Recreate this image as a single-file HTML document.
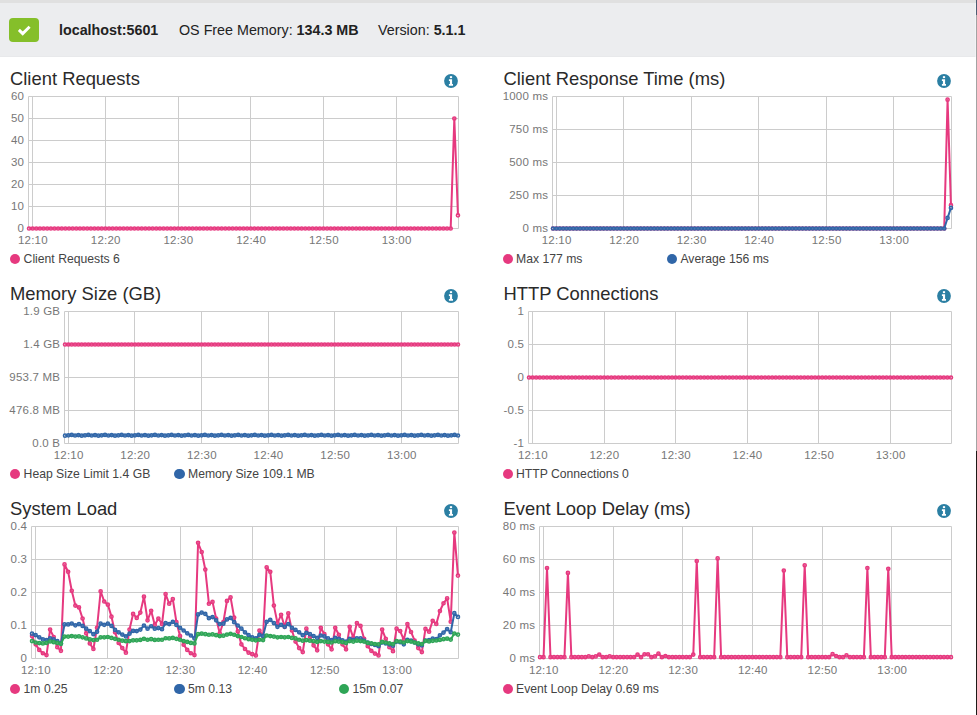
<!DOCTYPE html>
<html><head><meta charset="utf-8"><style>
html,body{margin:0;padding:0;width:977px;height:715px;overflow:hidden;background:#fff;font-family:"Liberation Sans",sans-serif;}
#topstrip{position:absolute;left:0;top:0;width:977px;height:3px;background:#e0e0e0}
#header{position:absolute;left:0;top:3px;width:977px;height:54px;background:#ecedef;border-bottom:1px solid #e8e9eb;box-sizing:border-box}
#ok{position:absolute;left:9px;top:18px;width:30px;height:24px;border-radius:4px;background:#85bf2a}
.h{position:absolute;top:22px;font-size:14.3px;color:#222;white-space:nowrap;line-height:17px}
.h b{font-weight:bold}
.title{position:absolute;font-size:18.4px;color:#2a2a2a;white-space:nowrap;line-height:21px}
.info{position:absolute}
.dot{position:absolute;width:10.2px;height:10.2px;border-radius:50%}
.leg{position:absolute;font-size:12.2px;color:#444;white-space:nowrap;line-height:16px}
#chart{position:absolute;left:0;top:0}
#edge{position:absolute;left:976px;top:0;width:1px;height:715px;background:#a3a3a3}
</style></head><body>
<div id="topstrip"></div>
<div id="header"></div>
<div id="ok"><svg width="30" height="24" viewBox="0 0 30 24"><path d="M9.9 11.9L13.7 15.6L20.6 8.8" fill="none" stroke="#fff" stroke-width="2.9" stroke-linecap="butt"/></svg></div>
<div class="h" style="left:59px"><b>localhost:5601</b></div>
<div class="h" style="left:179px">OS Free Memory: <b>134.3 MB</b></div>
<div class="h" style="left:378px">Version: <b>5.1.1</b></div>
<svg id="chart" width="977" height="715" font-family="Liberation Sans, sans-serif"><g stroke="#cccccc" stroke-width="1" fill="none"><line x1="28.5" y1="96.5" x2="458.5" y2="96.5"/><line x1="28.5" y1="118.5" x2="458.5" y2="118.5"/><line x1="28.5" y1="140.5" x2="458.5" y2="140.5"/><line x1="28.5" y1="162.5" x2="458.5" y2="162.5"/><line x1="28.5" y1="184.5" x2="458.5" y2="184.5"/><line x1="28.5" y1="206.5" x2="458.5" y2="206.5"/><line x1="28.5" y1="228.5" x2="458.5" y2="228.5"/><line x1="32.5" y1="96.5" x2="32.5" y2="228.5"/><line x1="105.5" y1="96.5" x2="105.5" y2="228.5"/><line x1="178.5" y1="96.5" x2="178.5" y2="228.5"/><line x1="250.5" y1="96.5" x2="250.5" y2="228.5"/><line x1="323.5" y1="96.5" x2="323.5" y2="228.5"/><line x1="396.5" y1="96.5" x2="396.5" y2="228.5"/><line x1="28.5" y1="96.5" x2="28.5" y2="228.5"/><line x1="458.5" y1="96.5" x2="458.5" y2="228.5"/></g><g fill="#777777" font-size="11.5" letter-spacing="0.2"><text x="24.2" y="100.1" text-anchor="end">60</text><text x="24.2" y="122.1" text-anchor="end">50</text><text x="24.2" y="144.1" text-anchor="end">40</text><text x="24.2" y="166.1" text-anchor="end">30</text><text x="24.2" y="188.1" text-anchor="end">20</text><text x="24.2" y="210.1" text-anchor="end">10</text><text x="24.2" y="232.1" text-anchor="end">0</text><text x="32.9" y="243.7" text-anchor="middle">12:10</text><text x="105.7" y="243.7" text-anchor="middle">12:20</text><text x="178.4" y="243.7" text-anchor="middle">12:30</text><text x="251.1" y="243.7" text-anchor="middle">12:40</text><text x="323.9" y="243.7" text-anchor="middle">12:50</text><text x="396.6" y="243.7" text-anchor="middle">13:00</text></g><polyline points="29.05,228.50 32.68,228.50 36.32,228.50 39.95,228.50 43.59,228.50 47.22,228.50 50.86,228.50 54.49,228.50 58.13,228.50 61.76,228.50 65.40,228.50 69.03,228.50 72.67,228.50 76.30,228.50 79.94,228.50 83.57,228.50 87.21,228.50 90.84,228.50 94.48,228.50 98.11,228.50 101.74,228.50 105.38,228.50 109.01,228.50 112.65,228.50 116.28,228.50 119.92,228.50 123.55,228.50 127.19,228.50 130.82,228.50 134.46,228.50 138.09,228.50 141.73,228.50 145.36,228.50 149.00,228.50 152.63,228.50 156.27,228.50 159.90,228.50 163.54,228.50 167.17,228.50 170.81,228.50 174.44,228.50 178.07,228.50 181.71,228.50 185.34,228.50 188.98,228.50 192.61,228.50 196.25,228.50 199.88,228.50 203.52,228.50 207.15,228.50 210.79,228.50 214.42,228.50 218.06,228.50 221.69,228.50 225.33,228.50 228.96,228.50 232.60,228.50 236.23,228.50 239.87,228.50 243.50,228.50 247.13,228.50 250.77,228.50 254.40,228.50 258.04,228.50 261.67,228.50 265.31,228.50 268.94,228.50 272.58,228.50 276.21,228.50 279.85,228.50 283.48,228.50 287.12,228.50 290.75,228.50 294.39,228.50 298.02,228.50 301.66,228.50 305.29,228.50 308.93,228.50 312.56,228.50 316.19,228.50 319.83,228.50 323.46,228.50 327.10,228.50 330.73,228.50 334.37,228.50 338.00,228.50 341.64,228.50 345.27,228.50 348.91,228.50 352.54,228.50 356.18,228.50 359.81,228.50 363.45,228.50 367.08,228.50 370.72,228.50 374.35,228.50 377.99,228.50 381.62,228.50 385.26,228.50 388.89,228.50 392.52,228.50 396.16,228.50 399.79,228.50 403.43,228.50 407.06,228.50 410.70,228.50 414.33,228.50 417.97,228.50 421.60,228.50 425.24,228.50 428.87,228.50 432.51,228.50 436.14,228.50 439.78,228.50 443.41,228.50 447.05,228.50 450.68,228.50 454.32,118.50 457.95,215.30" fill="none" stroke="#e6397f" stroke-width="2.0" stroke-linejoin="round"/><g fill="#fff" fill-opacity="0.12" stroke="#e6397f" stroke-width="1.5"><circle cx="29.05" cy="228.50" r="1.6"/><circle cx="32.68" cy="228.50" r="1.6"/><circle cx="36.32" cy="228.50" r="1.6"/><circle cx="39.95" cy="228.50" r="1.6"/><circle cx="43.59" cy="228.50" r="1.6"/><circle cx="47.22" cy="228.50" r="1.6"/><circle cx="50.86" cy="228.50" r="1.6"/><circle cx="54.49" cy="228.50" r="1.6"/><circle cx="58.13" cy="228.50" r="1.6"/><circle cx="61.76" cy="228.50" r="1.6"/><circle cx="65.40" cy="228.50" r="1.6"/><circle cx="69.03" cy="228.50" r="1.6"/><circle cx="72.67" cy="228.50" r="1.6"/><circle cx="76.30" cy="228.50" r="1.6"/><circle cx="79.94" cy="228.50" r="1.6"/><circle cx="83.57" cy="228.50" r="1.6"/><circle cx="87.21" cy="228.50" r="1.6"/><circle cx="90.84" cy="228.50" r="1.6"/><circle cx="94.48" cy="228.50" r="1.6"/><circle cx="98.11" cy="228.50" r="1.6"/><circle cx="101.74" cy="228.50" r="1.6"/><circle cx="105.38" cy="228.50" r="1.6"/><circle cx="109.01" cy="228.50" r="1.6"/><circle cx="112.65" cy="228.50" r="1.6"/><circle cx="116.28" cy="228.50" r="1.6"/><circle cx="119.92" cy="228.50" r="1.6"/><circle cx="123.55" cy="228.50" r="1.6"/><circle cx="127.19" cy="228.50" r="1.6"/><circle cx="130.82" cy="228.50" r="1.6"/><circle cx="134.46" cy="228.50" r="1.6"/><circle cx="138.09" cy="228.50" r="1.6"/><circle cx="141.73" cy="228.50" r="1.6"/><circle cx="145.36" cy="228.50" r="1.6"/><circle cx="149.00" cy="228.50" r="1.6"/><circle cx="152.63" cy="228.50" r="1.6"/><circle cx="156.27" cy="228.50" r="1.6"/><circle cx="159.90" cy="228.50" r="1.6"/><circle cx="163.54" cy="228.50" r="1.6"/><circle cx="167.17" cy="228.50" r="1.6"/><circle cx="170.81" cy="228.50" r="1.6"/><circle cx="174.44" cy="228.50" r="1.6"/><circle cx="178.07" cy="228.50" r="1.6"/><circle cx="181.71" cy="228.50" r="1.6"/><circle cx="185.34" cy="228.50" r="1.6"/><circle cx="188.98" cy="228.50" r="1.6"/><circle cx="192.61" cy="228.50" r="1.6"/><circle cx="196.25" cy="228.50" r="1.6"/><circle cx="199.88" cy="228.50" r="1.6"/><circle cx="203.52" cy="228.50" r="1.6"/><circle cx="207.15" cy="228.50" r="1.6"/><circle cx="210.79" cy="228.50" r="1.6"/><circle cx="214.42" cy="228.50" r="1.6"/><circle cx="218.06" cy="228.50" r="1.6"/><circle cx="221.69" cy="228.50" r="1.6"/><circle cx="225.33" cy="228.50" r="1.6"/><circle cx="228.96" cy="228.50" r="1.6"/><circle cx="232.60" cy="228.50" r="1.6"/><circle cx="236.23" cy="228.50" r="1.6"/><circle cx="239.87" cy="228.50" r="1.6"/><circle cx="243.50" cy="228.50" r="1.6"/><circle cx="247.13" cy="228.50" r="1.6"/><circle cx="250.77" cy="228.50" r="1.6"/><circle cx="254.40" cy="228.50" r="1.6"/><circle cx="258.04" cy="228.50" r="1.6"/><circle cx="261.67" cy="228.50" r="1.6"/><circle cx="265.31" cy="228.50" r="1.6"/><circle cx="268.94" cy="228.50" r="1.6"/><circle cx="272.58" cy="228.50" r="1.6"/><circle cx="276.21" cy="228.50" r="1.6"/><circle cx="279.85" cy="228.50" r="1.6"/><circle cx="283.48" cy="228.50" r="1.6"/><circle cx="287.12" cy="228.50" r="1.6"/><circle cx="290.75" cy="228.50" r="1.6"/><circle cx="294.39" cy="228.50" r="1.6"/><circle cx="298.02" cy="228.50" r="1.6"/><circle cx="301.66" cy="228.50" r="1.6"/><circle cx="305.29" cy="228.50" r="1.6"/><circle cx="308.93" cy="228.50" r="1.6"/><circle cx="312.56" cy="228.50" r="1.6"/><circle cx="316.19" cy="228.50" r="1.6"/><circle cx="319.83" cy="228.50" r="1.6"/><circle cx="323.46" cy="228.50" r="1.6"/><circle cx="327.10" cy="228.50" r="1.6"/><circle cx="330.73" cy="228.50" r="1.6"/><circle cx="334.37" cy="228.50" r="1.6"/><circle cx="338.00" cy="228.50" r="1.6"/><circle cx="341.64" cy="228.50" r="1.6"/><circle cx="345.27" cy="228.50" r="1.6"/><circle cx="348.91" cy="228.50" r="1.6"/><circle cx="352.54" cy="228.50" r="1.6"/><circle cx="356.18" cy="228.50" r="1.6"/><circle cx="359.81" cy="228.50" r="1.6"/><circle cx="363.45" cy="228.50" r="1.6"/><circle cx="367.08" cy="228.50" r="1.6"/><circle cx="370.72" cy="228.50" r="1.6"/><circle cx="374.35" cy="228.50" r="1.6"/><circle cx="377.99" cy="228.50" r="1.6"/><circle cx="381.62" cy="228.50" r="1.6"/><circle cx="385.26" cy="228.50" r="1.6"/><circle cx="388.89" cy="228.50" r="1.6"/><circle cx="392.52" cy="228.50" r="1.6"/><circle cx="396.16" cy="228.50" r="1.6"/><circle cx="399.79" cy="228.50" r="1.6"/><circle cx="403.43" cy="228.50" r="1.6"/><circle cx="407.06" cy="228.50" r="1.6"/><circle cx="410.70" cy="228.50" r="1.6"/><circle cx="414.33" cy="228.50" r="1.6"/><circle cx="417.97" cy="228.50" r="1.6"/><circle cx="421.60" cy="228.50" r="1.6"/><circle cx="425.24" cy="228.50" r="1.6"/><circle cx="428.87" cy="228.50" r="1.6"/><circle cx="432.51" cy="228.50" r="1.6"/><circle cx="436.14" cy="228.50" r="1.6"/><circle cx="439.78" cy="228.50" r="1.6"/><circle cx="443.41" cy="228.50" r="1.6"/><circle cx="447.05" cy="228.50" r="1.6"/><circle cx="450.68" cy="228.50" r="1.6"/><circle cx="454.32" cy="118.50" r="1.6"/><circle cx="457.95" cy="215.30" r="1.6"/></g><g stroke="#cccccc" stroke-width="1" fill="none"><line x1="552.5" y1="96.5" x2="951.5" y2="96.5"/><line x1="552.5" y1="129.5" x2="951.5" y2="129.5"/><line x1="552.5" y1="162.5" x2="951.5" y2="162.5"/><line x1="552.5" y1="195.5" x2="951.5" y2="195.5"/><line x1="552.5" y1="228.5" x2="951.5" y2="228.5"/><line x1="556.5" y1="96.5" x2="556.5" y2="228.5"/><line x1="623.5" y1="96.5" x2="623.5" y2="228.5"/><line x1="691.5" y1="96.5" x2="691.5" y2="228.5"/><line x1="758.5" y1="96.5" x2="758.5" y2="228.5"/><line x1="826.5" y1="96.5" x2="826.5" y2="228.5"/><line x1="893.5" y1="96.5" x2="893.5" y2="228.5"/><line x1="552.5" y1="96.5" x2="552.5" y2="228.5"/><line x1="951.5" y1="96.5" x2="951.5" y2="228.5"/></g><g fill="#777777" font-size="11.5" letter-spacing="0.2"><text x="548.2" y="100.1" text-anchor="end">1000 ms</text><text x="548.2" y="133.1" text-anchor="end">750 ms</text><text x="548.2" y="166.1" text-anchor="end">500 ms</text><text x="548.2" y="199.1" text-anchor="end">250 ms</text><text x="548.2" y="232.1" text-anchor="end">0 ms</text><text x="556.6" y="243.7" text-anchor="middle">12:10</text><text x="624.1" y="243.7" text-anchor="middle">12:20</text><text x="691.6" y="243.7" text-anchor="middle">12:30</text><text x="759.1" y="243.7" text-anchor="middle">12:40</text><text x="826.6" y="243.7" text-anchor="middle">12:50</text><text x="894.1" y="243.7" text-anchor="middle">13:00</text></g><polyline points="553.05,228.50 556.42,228.50 559.79,228.50 563.17,228.50 566.54,228.50 569.91,228.50 573.28,228.50 576.65,228.50 580.03,228.50 583.40,228.50 586.77,228.50 590.14,228.50 593.51,228.50 596.89,228.50 600.26,228.50 603.63,228.50 607.00,228.50 610.37,228.50 613.75,228.50 617.12,228.50 620.49,228.50 623.86,228.50 627.23,228.50 630.61,228.50 633.98,228.50 637.35,228.50 640.72,228.50 644.09,228.50 647.47,228.50 650.84,228.50 654.21,228.50 657.58,228.50 660.96,228.50 664.33,228.50 667.70,228.50 671.07,228.50 674.44,228.50 677.82,228.50 681.19,228.50 684.56,228.50 687.93,228.50 691.30,228.50 694.68,228.50 698.05,228.50 701.42,228.50 704.79,228.50 708.16,228.50 711.54,228.50 714.91,228.50 718.28,228.50 721.65,228.50 725.02,228.50 728.40,228.50 731.77,228.50 735.14,228.50 738.51,228.50 741.88,228.50 745.26,228.50 748.63,228.50 752.00,228.50 755.37,228.50 758.74,228.50 762.12,228.50 765.49,228.50 768.86,228.50 772.23,228.50 775.60,228.50 778.98,228.50 782.35,228.50 785.72,228.50 789.09,228.50 792.46,228.50 795.84,228.50 799.21,228.50 802.58,228.50 805.95,228.50 809.32,228.50 812.70,228.50 816.07,228.50 819.44,228.50 822.81,228.50 826.18,228.50 829.56,228.50 832.93,228.50 836.30,228.50 839.67,228.50 843.04,228.50 846.42,228.50 849.79,228.50 853.16,228.50 856.53,228.50 859.91,228.50 863.28,228.50 866.65,228.50 870.02,228.50 873.39,228.50 876.77,228.50 880.14,228.50 883.51,228.50 886.88,228.50 890.25,228.50 893.63,228.50 897.00,228.50 900.37,228.50 903.74,228.50 907.11,228.50 910.49,228.50 913.86,228.50 917.23,228.50 920.60,228.50 923.97,228.50 927.35,228.50 930.72,228.50 934.09,228.50 937.46,228.50 940.83,228.50 944.21,228.50 947.58,99.67 950.95,205.14" fill="none" stroke="#e6397f" stroke-width="2.0" stroke-linejoin="round"/><g fill="#fff" fill-opacity="0.12" stroke="#e6397f" stroke-width="1.5"><circle cx="553.05" cy="228.50" r="1.6"/><circle cx="556.42" cy="228.50" r="1.6"/><circle cx="559.79" cy="228.50" r="1.6"/><circle cx="563.17" cy="228.50" r="1.6"/><circle cx="566.54" cy="228.50" r="1.6"/><circle cx="569.91" cy="228.50" r="1.6"/><circle cx="573.28" cy="228.50" r="1.6"/><circle cx="576.65" cy="228.50" r="1.6"/><circle cx="580.03" cy="228.50" r="1.6"/><circle cx="583.40" cy="228.50" r="1.6"/><circle cx="586.77" cy="228.50" r="1.6"/><circle cx="590.14" cy="228.50" r="1.6"/><circle cx="593.51" cy="228.50" r="1.6"/><circle cx="596.89" cy="228.50" r="1.6"/><circle cx="600.26" cy="228.50" r="1.6"/><circle cx="603.63" cy="228.50" r="1.6"/><circle cx="607.00" cy="228.50" r="1.6"/><circle cx="610.37" cy="228.50" r="1.6"/><circle cx="613.75" cy="228.50" r="1.6"/><circle cx="617.12" cy="228.50" r="1.6"/><circle cx="620.49" cy="228.50" r="1.6"/><circle cx="623.86" cy="228.50" r="1.6"/><circle cx="627.23" cy="228.50" r="1.6"/><circle cx="630.61" cy="228.50" r="1.6"/><circle cx="633.98" cy="228.50" r="1.6"/><circle cx="637.35" cy="228.50" r="1.6"/><circle cx="640.72" cy="228.50" r="1.6"/><circle cx="644.09" cy="228.50" r="1.6"/><circle cx="647.47" cy="228.50" r="1.6"/><circle cx="650.84" cy="228.50" r="1.6"/><circle cx="654.21" cy="228.50" r="1.6"/><circle cx="657.58" cy="228.50" r="1.6"/><circle cx="660.96" cy="228.50" r="1.6"/><circle cx="664.33" cy="228.50" r="1.6"/><circle cx="667.70" cy="228.50" r="1.6"/><circle cx="671.07" cy="228.50" r="1.6"/><circle cx="674.44" cy="228.50" r="1.6"/><circle cx="677.82" cy="228.50" r="1.6"/><circle cx="681.19" cy="228.50" r="1.6"/><circle cx="684.56" cy="228.50" r="1.6"/><circle cx="687.93" cy="228.50" r="1.6"/><circle cx="691.30" cy="228.50" r="1.6"/><circle cx="694.68" cy="228.50" r="1.6"/><circle cx="698.05" cy="228.50" r="1.6"/><circle cx="701.42" cy="228.50" r="1.6"/><circle cx="704.79" cy="228.50" r="1.6"/><circle cx="708.16" cy="228.50" r="1.6"/><circle cx="711.54" cy="228.50" r="1.6"/><circle cx="714.91" cy="228.50" r="1.6"/><circle cx="718.28" cy="228.50" r="1.6"/><circle cx="721.65" cy="228.50" r="1.6"/><circle cx="725.02" cy="228.50" r="1.6"/><circle cx="728.40" cy="228.50" r="1.6"/><circle cx="731.77" cy="228.50" r="1.6"/><circle cx="735.14" cy="228.50" r="1.6"/><circle cx="738.51" cy="228.50" r="1.6"/><circle cx="741.88" cy="228.50" r="1.6"/><circle cx="745.26" cy="228.50" r="1.6"/><circle cx="748.63" cy="228.50" r="1.6"/><circle cx="752.00" cy="228.50" r="1.6"/><circle cx="755.37" cy="228.50" r="1.6"/><circle cx="758.74" cy="228.50" r="1.6"/><circle cx="762.12" cy="228.50" r="1.6"/><circle cx="765.49" cy="228.50" r="1.6"/><circle cx="768.86" cy="228.50" r="1.6"/><circle cx="772.23" cy="228.50" r="1.6"/><circle cx="775.60" cy="228.50" r="1.6"/><circle cx="778.98" cy="228.50" r="1.6"/><circle cx="782.35" cy="228.50" r="1.6"/><circle cx="785.72" cy="228.50" r="1.6"/><circle cx="789.09" cy="228.50" r="1.6"/><circle cx="792.46" cy="228.50" r="1.6"/><circle cx="795.84" cy="228.50" r="1.6"/><circle cx="799.21" cy="228.50" r="1.6"/><circle cx="802.58" cy="228.50" r="1.6"/><circle cx="805.95" cy="228.50" r="1.6"/><circle cx="809.32" cy="228.50" r="1.6"/><circle cx="812.70" cy="228.50" r="1.6"/><circle cx="816.07" cy="228.50" r="1.6"/><circle cx="819.44" cy="228.50" r="1.6"/><circle cx="822.81" cy="228.50" r="1.6"/><circle cx="826.18" cy="228.50" r="1.6"/><circle cx="829.56" cy="228.50" r="1.6"/><circle cx="832.93" cy="228.50" r="1.6"/><circle cx="836.30" cy="228.50" r="1.6"/><circle cx="839.67" cy="228.50" r="1.6"/><circle cx="843.04" cy="228.50" r="1.6"/><circle cx="846.42" cy="228.50" r="1.6"/><circle cx="849.79" cy="228.50" r="1.6"/><circle cx="853.16" cy="228.50" r="1.6"/><circle cx="856.53" cy="228.50" r="1.6"/><circle cx="859.91" cy="228.50" r="1.6"/><circle cx="863.28" cy="228.50" r="1.6"/><circle cx="866.65" cy="228.50" r="1.6"/><circle cx="870.02" cy="228.50" r="1.6"/><circle cx="873.39" cy="228.50" r="1.6"/><circle cx="876.77" cy="228.50" r="1.6"/><circle cx="880.14" cy="228.50" r="1.6"/><circle cx="883.51" cy="228.50" r="1.6"/><circle cx="886.88" cy="228.50" r="1.6"/><circle cx="890.25" cy="228.50" r="1.6"/><circle cx="893.63" cy="228.50" r="1.6"/><circle cx="897.00" cy="228.50" r="1.6"/><circle cx="900.37" cy="228.50" r="1.6"/><circle cx="903.74" cy="228.50" r="1.6"/><circle cx="907.11" cy="228.50" r="1.6"/><circle cx="910.49" cy="228.50" r="1.6"/><circle cx="913.86" cy="228.50" r="1.6"/><circle cx="917.23" cy="228.50" r="1.6"/><circle cx="920.60" cy="228.50" r="1.6"/><circle cx="923.97" cy="228.50" r="1.6"/><circle cx="927.35" cy="228.50" r="1.6"/><circle cx="930.72" cy="228.50" r="1.6"/><circle cx="934.09" cy="228.50" r="1.6"/><circle cx="937.46" cy="228.50" r="1.6"/><circle cx="940.83" cy="228.50" r="1.6"/><circle cx="944.21" cy="228.50" r="1.6"/><circle cx="947.58" cy="99.67" r="1.6"/><circle cx="950.95" cy="205.14" r="1.6"/></g><polyline points="553.05,228.50 556.42,228.50 559.79,228.50 563.17,228.50 566.54,228.50 569.91,228.50 573.28,228.50 576.65,228.50 580.03,228.50 583.40,228.50 586.77,228.50 590.14,228.50 593.51,228.50 596.89,228.50 600.26,228.50 603.63,228.50 607.00,228.50 610.37,228.50 613.75,228.50 617.12,228.50 620.49,228.50 623.86,228.50 627.23,228.50 630.61,228.50 633.98,228.50 637.35,228.50 640.72,228.50 644.09,228.50 647.47,228.50 650.84,228.50 654.21,228.50 657.58,228.50 660.96,228.50 664.33,228.50 667.70,228.50 671.07,228.50 674.44,228.50 677.82,228.50 681.19,228.50 684.56,228.50 687.93,228.50 691.30,228.50 694.68,228.50 698.05,228.50 701.42,228.50 704.79,228.50 708.16,228.50 711.54,228.50 714.91,228.50 718.28,228.50 721.65,228.50 725.02,228.50 728.40,228.50 731.77,228.50 735.14,228.50 738.51,228.50 741.88,228.50 745.26,228.50 748.63,228.50 752.00,228.50 755.37,228.50 758.74,228.50 762.12,228.50 765.49,228.50 768.86,228.50 772.23,228.50 775.60,228.50 778.98,228.50 782.35,228.50 785.72,228.50 789.09,228.50 792.46,228.50 795.84,228.50 799.21,228.50 802.58,228.50 805.95,228.50 809.32,228.50 812.70,228.50 816.07,228.50 819.44,228.50 822.81,228.50 826.18,228.50 829.56,228.50 832.93,228.50 836.30,228.50 839.67,228.50 843.04,228.50 846.42,228.50 849.79,228.50 853.16,228.50 856.53,228.50 859.91,228.50 863.28,228.50 866.65,228.50 870.02,228.50 873.39,228.50 876.77,228.50 880.14,228.50 883.51,228.50 886.88,228.50 890.25,228.50 893.63,228.50 897.00,228.50 900.37,228.50 903.74,228.50 907.11,228.50 910.49,228.50 913.86,228.50 917.23,228.50 920.60,228.50 923.97,228.50 927.35,228.50 930.72,228.50 934.09,228.50 937.46,228.50 940.83,228.50 944.21,228.50 947.58,217.94 950.95,207.91" fill="none" stroke="#3066a8" stroke-width="2.0" stroke-linejoin="round"/><g fill="#fff" fill-opacity="0.12" stroke="#3066a8" stroke-width="1.5"><circle cx="553.05" cy="228.50" r="1.6"/><circle cx="556.42" cy="228.50" r="1.6"/><circle cx="559.79" cy="228.50" r="1.6"/><circle cx="563.17" cy="228.50" r="1.6"/><circle cx="566.54" cy="228.50" r="1.6"/><circle cx="569.91" cy="228.50" r="1.6"/><circle cx="573.28" cy="228.50" r="1.6"/><circle cx="576.65" cy="228.50" r="1.6"/><circle cx="580.03" cy="228.50" r="1.6"/><circle cx="583.40" cy="228.50" r="1.6"/><circle cx="586.77" cy="228.50" r="1.6"/><circle cx="590.14" cy="228.50" r="1.6"/><circle cx="593.51" cy="228.50" r="1.6"/><circle cx="596.89" cy="228.50" r="1.6"/><circle cx="600.26" cy="228.50" r="1.6"/><circle cx="603.63" cy="228.50" r="1.6"/><circle cx="607.00" cy="228.50" r="1.6"/><circle cx="610.37" cy="228.50" r="1.6"/><circle cx="613.75" cy="228.50" r="1.6"/><circle cx="617.12" cy="228.50" r="1.6"/><circle cx="620.49" cy="228.50" r="1.6"/><circle cx="623.86" cy="228.50" r="1.6"/><circle cx="627.23" cy="228.50" r="1.6"/><circle cx="630.61" cy="228.50" r="1.6"/><circle cx="633.98" cy="228.50" r="1.6"/><circle cx="637.35" cy="228.50" r="1.6"/><circle cx="640.72" cy="228.50" r="1.6"/><circle cx="644.09" cy="228.50" r="1.6"/><circle cx="647.47" cy="228.50" r="1.6"/><circle cx="650.84" cy="228.50" r="1.6"/><circle cx="654.21" cy="228.50" r="1.6"/><circle cx="657.58" cy="228.50" r="1.6"/><circle cx="660.96" cy="228.50" r="1.6"/><circle cx="664.33" cy="228.50" r="1.6"/><circle cx="667.70" cy="228.50" r="1.6"/><circle cx="671.07" cy="228.50" r="1.6"/><circle cx="674.44" cy="228.50" r="1.6"/><circle cx="677.82" cy="228.50" r="1.6"/><circle cx="681.19" cy="228.50" r="1.6"/><circle cx="684.56" cy="228.50" r="1.6"/><circle cx="687.93" cy="228.50" r="1.6"/><circle cx="691.30" cy="228.50" r="1.6"/><circle cx="694.68" cy="228.50" r="1.6"/><circle cx="698.05" cy="228.50" r="1.6"/><circle cx="701.42" cy="228.50" r="1.6"/><circle cx="704.79" cy="228.50" r="1.6"/><circle cx="708.16" cy="228.50" r="1.6"/><circle cx="711.54" cy="228.50" r="1.6"/><circle cx="714.91" cy="228.50" r="1.6"/><circle cx="718.28" cy="228.50" r="1.6"/><circle cx="721.65" cy="228.50" r="1.6"/><circle cx="725.02" cy="228.50" r="1.6"/><circle cx="728.40" cy="228.50" r="1.6"/><circle cx="731.77" cy="228.50" r="1.6"/><circle cx="735.14" cy="228.50" r="1.6"/><circle cx="738.51" cy="228.50" r="1.6"/><circle cx="741.88" cy="228.50" r="1.6"/><circle cx="745.26" cy="228.50" r="1.6"/><circle cx="748.63" cy="228.50" r="1.6"/><circle cx="752.00" cy="228.50" r="1.6"/><circle cx="755.37" cy="228.50" r="1.6"/><circle cx="758.74" cy="228.50" r="1.6"/><circle cx="762.12" cy="228.50" r="1.6"/><circle cx="765.49" cy="228.50" r="1.6"/><circle cx="768.86" cy="228.50" r="1.6"/><circle cx="772.23" cy="228.50" r="1.6"/><circle cx="775.60" cy="228.50" r="1.6"/><circle cx="778.98" cy="228.50" r="1.6"/><circle cx="782.35" cy="228.50" r="1.6"/><circle cx="785.72" cy="228.50" r="1.6"/><circle cx="789.09" cy="228.50" r="1.6"/><circle cx="792.46" cy="228.50" r="1.6"/><circle cx="795.84" cy="228.50" r="1.6"/><circle cx="799.21" cy="228.50" r="1.6"/><circle cx="802.58" cy="228.50" r="1.6"/><circle cx="805.95" cy="228.50" r="1.6"/><circle cx="809.32" cy="228.50" r="1.6"/><circle cx="812.70" cy="228.50" r="1.6"/><circle cx="816.07" cy="228.50" r="1.6"/><circle cx="819.44" cy="228.50" r="1.6"/><circle cx="822.81" cy="228.50" r="1.6"/><circle cx="826.18" cy="228.50" r="1.6"/><circle cx="829.56" cy="228.50" r="1.6"/><circle cx="832.93" cy="228.50" r="1.6"/><circle cx="836.30" cy="228.50" r="1.6"/><circle cx="839.67" cy="228.50" r="1.6"/><circle cx="843.04" cy="228.50" r="1.6"/><circle cx="846.42" cy="228.50" r="1.6"/><circle cx="849.79" cy="228.50" r="1.6"/><circle cx="853.16" cy="228.50" r="1.6"/><circle cx="856.53" cy="228.50" r="1.6"/><circle cx="859.91" cy="228.50" r="1.6"/><circle cx="863.28" cy="228.50" r="1.6"/><circle cx="866.65" cy="228.50" r="1.6"/><circle cx="870.02" cy="228.50" r="1.6"/><circle cx="873.39" cy="228.50" r="1.6"/><circle cx="876.77" cy="228.50" r="1.6"/><circle cx="880.14" cy="228.50" r="1.6"/><circle cx="883.51" cy="228.50" r="1.6"/><circle cx="886.88" cy="228.50" r="1.6"/><circle cx="890.25" cy="228.50" r="1.6"/><circle cx="893.63" cy="228.50" r="1.6"/><circle cx="897.00" cy="228.50" r="1.6"/><circle cx="900.37" cy="228.50" r="1.6"/><circle cx="903.74" cy="228.50" r="1.6"/><circle cx="907.11" cy="228.50" r="1.6"/><circle cx="910.49" cy="228.50" r="1.6"/><circle cx="913.86" cy="228.50" r="1.6"/><circle cx="917.23" cy="228.50" r="1.6"/><circle cx="920.60" cy="228.50" r="1.6"/><circle cx="923.97" cy="228.50" r="1.6"/><circle cx="927.35" cy="228.50" r="1.6"/><circle cx="930.72" cy="228.50" r="1.6"/><circle cx="934.09" cy="228.50" r="1.6"/><circle cx="937.46" cy="228.50" r="1.6"/><circle cx="940.83" cy="228.50" r="1.6"/><circle cx="944.21" cy="228.50" r="1.6"/><circle cx="947.58" cy="217.94" r="1.6"/><circle cx="950.95" cy="207.91" r="1.6"/></g><g stroke="#cccccc" stroke-width="1" fill="none"><line x1="64.5" y1="311.5" x2="458.5" y2="311.5"/><line x1="64.5" y1="344.5" x2="458.5" y2="344.5"/><line x1="64.5" y1="377.5" x2="458.5" y2="377.5"/><line x1="64.5" y1="410.5" x2="458.5" y2="410.5"/><line x1="64.5" y1="443.5" x2="458.5" y2="443.5"/><line x1="68.5" y1="311.5" x2="68.5" y2="443.5"/><line x1="134.5" y1="311.5" x2="134.5" y2="443.5"/><line x1="201.5" y1="311.5" x2="201.5" y2="443.5"/><line x1="268.5" y1="311.5" x2="268.5" y2="443.5"/><line x1="334.5" y1="311.5" x2="334.5" y2="443.5"/><line x1="401.5" y1="311.5" x2="401.5" y2="443.5"/><line x1="64.5" y1="311.5" x2="64.5" y2="443.5"/><line x1="458.5" y1="311.5" x2="458.5" y2="443.5"/></g><g fill="#777777" font-size="11.5" letter-spacing="0.2"><text x="60.2" y="315.1" text-anchor="end">1.9 GB</text><text x="60.2" y="348.1" text-anchor="end">1.4 GB</text><text x="60.2" y="381.1" text-anchor="end">953.7 MB</text><text x="60.2" y="414.1" text-anchor="end">476.8 MB</text><text x="60.2" y="447.1" text-anchor="end">0.0 B</text><text x="68.6" y="458.7" text-anchor="middle">12:10</text><text x="135.2" y="458.7" text-anchor="middle">12:20</text><text x="201.9" y="458.7" text-anchor="middle">12:30</text><text x="268.5" y="458.7" text-anchor="middle">12:40</text><text x="335.2" y="458.7" text-anchor="middle">12:50</text><text x="401.8" y="458.7" text-anchor="middle">13:00</text></g><polyline points="65.05,344.50 68.38,344.50 71.71,344.50 75.04,344.50 78.37,344.50 81.70,344.50 85.03,344.50 88.36,344.50 91.69,344.50 95.02,344.50 98.35,344.50 101.68,344.50 105.01,344.50 108.34,344.50 111.67,344.50 114.99,344.50 118.32,344.50 121.65,344.50 124.98,344.50 128.31,344.50 131.64,344.50 134.97,344.50 138.30,344.50 141.63,344.50 144.96,344.50 148.29,344.50 151.62,344.50 154.95,344.50 158.28,344.50 161.61,344.50 164.94,344.50 168.27,344.50 171.60,344.50 174.93,344.50 178.26,344.50 181.59,344.50 184.92,344.50 188.25,344.50 191.58,344.50 194.91,344.50 198.24,344.50 201.57,344.50 204.90,344.50 208.23,344.50 211.56,344.50 214.88,344.50 218.21,344.50 221.54,344.50 224.87,344.50 228.20,344.50 231.53,344.50 234.86,344.50 238.19,344.50 241.52,344.50 244.85,344.50 248.18,344.50 251.51,344.50 254.84,344.50 258.17,344.50 261.50,344.50 264.83,344.50 268.16,344.50 271.49,344.50 274.82,344.50 278.15,344.50 281.48,344.50 284.81,344.50 288.14,344.50 291.47,344.50 294.80,344.50 298.13,344.50 301.46,344.50 304.79,344.50 308.12,344.50 311.44,344.50 314.77,344.50 318.10,344.50 321.43,344.50 324.76,344.50 328.09,344.50 331.42,344.50 334.75,344.50 338.08,344.50 341.41,344.50 344.74,344.50 348.07,344.50 351.40,344.50 354.73,344.50 358.06,344.50 361.39,344.50 364.72,344.50 368.05,344.50 371.38,344.50 374.71,344.50 378.04,344.50 381.37,344.50 384.70,344.50 388.03,344.50 391.36,344.50 394.69,344.50 398.02,344.50 401.35,344.50 404.68,344.50 408.01,344.50 411.33,344.50 414.66,344.50 417.99,344.50 421.32,344.50 424.65,344.50 427.98,344.50 431.31,344.50 434.64,344.50 437.97,344.50 441.30,344.50 444.63,344.50 447.96,344.50 451.29,344.50 454.62,344.50 457.95,344.50" fill="none" stroke="#e6397f" stroke-width="2.0" stroke-linejoin="round"/><g fill="#fff" fill-opacity="0.12" stroke="#e6397f" stroke-width="1.5"><circle cx="65.05" cy="344.50" r="1.6"/><circle cx="68.38" cy="344.50" r="1.6"/><circle cx="71.71" cy="344.50" r="1.6"/><circle cx="75.04" cy="344.50" r="1.6"/><circle cx="78.37" cy="344.50" r="1.6"/><circle cx="81.70" cy="344.50" r="1.6"/><circle cx="85.03" cy="344.50" r="1.6"/><circle cx="88.36" cy="344.50" r="1.6"/><circle cx="91.69" cy="344.50" r="1.6"/><circle cx="95.02" cy="344.50" r="1.6"/><circle cx="98.35" cy="344.50" r="1.6"/><circle cx="101.68" cy="344.50" r="1.6"/><circle cx="105.01" cy="344.50" r="1.6"/><circle cx="108.34" cy="344.50" r="1.6"/><circle cx="111.67" cy="344.50" r="1.6"/><circle cx="114.99" cy="344.50" r="1.6"/><circle cx="118.32" cy="344.50" r="1.6"/><circle cx="121.65" cy="344.50" r="1.6"/><circle cx="124.98" cy="344.50" r="1.6"/><circle cx="128.31" cy="344.50" r="1.6"/><circle cx="131.64" cy="344.50" r="1.6"/><circle cx="134.97" cy="344.50" r="1.6"/><circle cx="138.30" cy="344.50" r="1.6"/><circle cx="141.63" cy="344.50" r="1.6"/><circle cx="144.96" cy="344.50" r="1.6"/><circle cx="148.29" cy="344.50" r="1.6"/><circle cx="151.62" cy="344.50" r="1.6"/><circle cx="154.95" cy="344.50" r="1.6"/><circle cx="158.28" cy="344.50" r="1.6"/><circle cx="161.61" cy="344.50" r="1.6"/><circle cx="164.94" cy="344.50" r="1.6"/><circle cx="168.27" cy="344.50" r="1.6"/><circle cx="171.60" cy="344.50" r="1.6"/><circle cx="174.93" cy="344.50" r="1.6"/><circle cx="178.26" cy="344.50" r="1.6"/><circle cx="181.59" cy="344.50" r="1.6"/><circle cx="184.92" cy="344.50" r="1.6"/><circle cx="188.25" cy="344.50" r="1.6"/><circle cx="191.58" cy="344.50" r="1.6"/><circle cx="194.91" cy="344.50" r="1.6"/><circle cx="198.24" cy="344.50" r="1.6"/><circle cx="201.57" cy="344.50" r="1.6"/><circle cx="204.90" cy="344.50" r="1.6"/><circle cx="208.23" cy="344.50" r="1.6"/><circle cx="211.56" cy="344.50" r="1.6"/><circle cx="214.88" cy="344.50" r="1.6"/><circle cx="218.21" cy="344.50" r="1.6"/><circle cx="221.54" cy="344.50" r="1.6"/><circle cx="224.87" cy="344.50" r="1.6"/><circle cx="228.20" cy="344.50" r="1.6"/><circle cx="231.53" cy="344.50" r="1.6"/><circle cx="234.86" cy="344.50" r="1.6"/><circle cx="238.19" cy="344.50" r="1.6"/><circle cx="241.52" cy="344.50" r="1.6"/><circle cx="244.85" cy="344.50" r="1.6"/><circle cx="248.18" cy="344.50" r="1.6"/><circle cx="251.51" cy="344.50" r="1.6"/><circle cx="254.84" cy="344.50" r="1.6"/><circle cx="258.17" cy="344.50" r="1.6"/><circle cx="261.50" cy="344.50" r="1.6"/><circle cx="264.83" cy="344.50" r="1.6"/><circle cx="268.16" cy="344.50" r="1.6"/><circle cx="271.49" cy="344.50" r="1.6"/><circle cx="274.82" cy="344.50" r="1.6"/><circle cx="278.15" cy="344.50" r="1.6"/><circle cx="281.48" cy="344.50" r="1.6"/><circle cx="284.81" cy="344.50" r="1.6"/><circle cx="288.14" cy="344.50" r="1.6"/><circle cx="291.47" cy="344.50" r="1.6"/><circle cx="294.80" cy="344.50" r="1.6"/><circle cx="298.13" cy="344.50" r="1.6"/><circle cx="301.46" cy="344.50" r="1.6"/><circle cx="304.79" cy="344.50" r="1.6"/><circle cx="308.12" cy="344.50" r="1.6"/><circle cx="311.44" cy="344.50" r="1.6"/><circle cx="314.77" cy="344.50" r="1.6"/><circle cx="318.10" cy="344.50" r="1.6"/><circle cx="321.43" cy="344.50" r="1.6"/><circle cx="324.76" cy="344.50" r="1.6"/><circle cx="328.09" cy="344.50" r="1.6"/><circle cx="331.42" cy="344.50" r="1.6"/><circle cx="334.75" cy="344.50" r="1.6"/><circle cx="338.08" cy="344.50" r="1.6"/><circle cx="341.41" cy="344.50" r="1.6"/><circle cx="344.74" cy="344.50" r="1.6"/><circle cx="348.07" cy="344.50" r="1.6"/><circle cx="351.40" cy="344.50" r="1.6"/><circle cx="354.73" cy="344.50" r="1.6"/><circle cx="358.06" cy="344.50" r="1.6"/><circle cx="361.39" cy="344.50" r="1.6"/><circle cx="364.72" cy="344.50" r="1.6"/><circle cx="368.05" cy="344.50" r="1.6"/><circle cx="371.38" cy="344.50" r="1.6"/><circle cx="374.71" cy="344.50" r="1.6"/><circle cx="378.04" cy="344.50" r="1.6"/><circle cx="381.37" cy="344.50" r="1.6"/><circle cx="384.70" cy="344.50" r="1.6"/><circle cx="388.03" cy="344.50" r="1.6"/><circle cx="391.36" cy="344.50" r="1.6"/><circle cx="394.69" cy="344.50" r="1.6"/><circle cx="398.02" cy="344.50" r="1.6"/><circle cx="401.35" cy="344.50" r="1.6"/><circle cx="404.68" cy="344.50" r="1.6"/><circle cx="408.01" cy="344.50" r="1.6"/><circle cx="411.33" cy="344.50" r="1.6"/><circle cx="414.66" cy="344.50" r="1.6"/><circle cx="417.99" cy="344.50" r="1.6"/><circle cx="421.32" cy="344.50" r="1.6"/><circle cx="424.65" cy="344.50" r="1.6"/><circle cx="427.98" cy="344.50" r="1.6"/><circle cx="431.31" cy="344.50" r="1.6"/><circle cx="434.64" cy="344.50" r="1.6"/><circle cx="437.97" cy="344.50" r="1.6"/><circle cx="441.30" cy="344.50" r="1.6"/><circle cx="444.63" cy="344.50" r="1.6"/><circle cx="447.96" cy="344.50" r="1.6"/><circle cx="451.29" cy="344.50" r="1.6"/><circle cx="454.62" cy="344.50" r="1.6"/><circle cx="457.95" cy="344.50" r="1.6"/></g><polyline points="65.05,435.70 68.38,435.30 71.71,434.90 75.04,435.50 78.37,435.10 81.70,435.70 85.03,435.30 88.36,434.90 91.69,435.50 95.02,435.10 98.35,435.70 101.68,435.30 105.01,434.90 108.34,435.50 111.67,435.10 114.99,435.70 118.32,435.30 121.65,434.90 124.98,435.50 128.31,435.10 131.64,435.70 134.97,435.30 138.30,434.90 141.63,435.50 144.96,435.10 148.29,435.70 151.62,435.30 154.95,434.90 158.28,435.50 161.61,435.10 164.94,435.70 168.27,435.30 171.60,434.90 174.93,435.50 178.26,435.10 181.59,435.70 184.92,435.30 188.25,434.90 191.58,435.50 194.91,435.10 198.24,435.70 201.57,435.30 204.90,434.90 208.23,435.50 211.56,435.10 214.88,435.70 218.21,435.30 221.54,434.90 224.87,435.50 228.20,435.10 231.53,435.70 234.86,435.30 238.19,434.90 241.52,435.50 244.85,435.10 248.18,435.70 251.51,435.30 254.84,434.90 258.17,435.50 261.50,435.10 264.83,435.70 268.16,435.30 271.49,434.90 274.82,435.50 278.15,435.10 281.48,435.70 284.81,435.30 288.14,434.90 291.47,435.50 294.80,435.10 298.13,435.70 301.46,435.30 304.79,434.90 308.12,435.50 311.44,435.10 314.77,435.70 318.10,435.30 321.43,434.90 324.76,435.50 328.09,435.10 331.42,435.70 334.75,435.30 338.08,434.90 341.41,435.50 344.74,435.10 348.07,435.70 351.40,435.30 354.73,434.90 358.06,435.50 361.39,435.10 364.72,435.70 368.05,435.30 371.38,434.90 374.71,435.50 378.04,435.10 381.37,435.70 384.70,435.30 388.03,434.90 391.36,435.50 394.69,435.10 398.02,435.70 401.35,435.30 404.68,434.90 408.01,435.50 411.33,435.10 414.66,435.70 417.99,435.30 421.32,434.90 424.65,435.50 427.98,435.10 431.31,435.70 434.64,435.30 437.97,434.90 441.30,435.50 444.63,435.10 447.96,435.70 451.29,435.30 454.62,434.90 457.95,435.50" fill="none" stroke="#3066a8" stroke-width="2.0" stroke-linejoin="round"/><g fill="#fff" fill-opacity="0.12" stroke="#3066a8" stroke-width="1.5"><circle cx="65.05" cy="435.70" r="1.6"/><circle cx="68.38" cy="435.30" r="1.6"/><circle cx="71.71" cy="434.90" r="1.6"/><circle cx="75.04" cy="435.50" r="1.6"/><circle cx="78.37" cy="435.10" r="1.6"/><circle cx="81.70" cy="435.70" r="1.6"/><circle cx="85.03" cy="435.30" r="1.6"/><circle cx="88.36" cy="434.90" r="1.6"/><circle cx="91.69" cy="435.50" r="1.6"/><circle cx="95.02" cy="435.10" r="1.6"/><circle cx="98.35" cy="435.70" r="1.6"/><circle cx="101.68" cy="435.30" r="1.6"/><circle cx="105.01" cy="434.90" r="1.6"/><circle cx="108.34" cy="435.50" r="1.6"/><circle cx="111.67" cy="435.10" r="1.6"/><circle cx="114.99" cy="435.70" r="1.6"/><circle cx="118.32" cy="435.30" r="1.6"/><circle cx="121.65" cy="434.90" r="1.6"/><circle cx="124.98" cy="435.50" r="1.6"/><circle cx="128.31" cy="435.10" r="1.6"/><circle cx="131.64" cy="435.70" r="1.6"/><circle cx="134.97" cy="435.30" r="1.6"/><circle cx="138.30" cy="434.90" r="1.6"/><circle cx="141.63" cy="435.50" r="1.6"/><circle cx="144.96" cy="435.10" r="1.6"/><circle cx="148.29" cy="435.70" r="1.6"/><circle cx="151.62" cy="435.30" r="1.6"/><circle cx="154.95" cy="434.90" r="1.6"/><circle cx="158.28" cy="435.50" r="1.6"/><circle cx="161.61" cy="435.10" r="1.6"/><circle cx="164.94" cy="435.70" r="1.6"/><circle cx="168.27" cy="435.30" r="1.6"/><circle cx="171.60" cy="434.90" r="1.6"/><circle cx="174.93" cy="435.50" r="1.6"/><circle cx="178.26" cy="435.10" r="1.6"/><circle cx="181.59" cy="435.70" r="1.6"/><circle cx="184.92" cy="435.30" r="1.6"/><circle cx="188.25" cy="434.90" r="1.6"/><circle cx="191.58" cy="435.50" r="1.6"/><circle cx="194.91" cy="435.10" r="1.6"/><circle cx="198.24" cy="435.70" r="1.6"/><circle cx="201.57" cy="435.30" r="1.6"/><circle cx="204.90" cy="434.90" r="1.6"/><circle cx="208.23" cy="435.50" r="1.6"/><circle cx="211.56" cy="435.10" r="1.6"/><circle cx="214.88" cy="435.70" r="1.6"/><circle cx="218.21" cy="435.30" r="1.6"/><circle cx="221.54" cy="434.90" r="1.6"/><circle cx="224.87" cy="435.50" r="1.6"/><circle cx="228.20" cy="435.10" r="1.6"/><circle cx="231.53" cy="435.70" r="1.6"/><circle cx="234.86" cy="435.30" r="1.6"/><circle cx="238.19" cy="434.90" r="1.6"/><circle cx="241.52" cy="435.50" r="1.6"/><circle cx="244.85" cy="435.10" r="1.6"/><circle cx="248.18" cy="435.70" r="1.6"/><circle cx="251.51" cy="435.30" r="1.6"/><circle cx="254.84" cy="434.90" r="1.6"/><circle cx="258.17" cy="435.50" r="1.6"/><circle cx="261.50" cy="435.10" r="1.6"/><circle cx="264.83" cy="435.70" r="1.6"/><circle cx="268.16" cy="435.30" r="1.6"/><circle cx="271.49" cy="434.90" r="1.6"/><circle cx="274.82" cy="435.50" r="1.6"/><circle cx="278.15" cy="435.10" r="1.6"/><circle cx="281.48" cy="435.70" r="1.6"/><circle cx="284.81" cy="435.30" r="1.6"/><circle cx="288.14" cy="434.90" r="1.6"/><circle cx="291.47" cy="435.50" r="1.6"/><circle cx="294.80" cy="435.10" r="1.6"/><circle cx="298.13" cy="435.70" r="1.6"/><circle cx="301.46" cy="435.30" r="1.6"/><circle cx="304.79" cy="434.90" r="1.6"/><circle cx="308.12" cy="435.50" r="1.6"/><circle cx="311.44" cy="435.10" r="1.6"/><circle cx="314.77" cy="435.70" r="1.6"/><circle cx="318.10" cy="435.30" r="1.6"/><circle cx="321.43" cy="434.90" r="1.6"/><circle cx="324.76" cy="435.50" r="1.6"/><circle cx="328.09" cy="435.10" r="1.6"/><circle cx="331.42" cy="435.70" r="1.6"/><circle cx="334.75" cy="435.30" r="1.6"/><circle cx="338.08" cy="434.90" r="1.6"/><circle cx="341.41" cy="435.50" r="1.6"/><circle cx="344.74" cy="435.10" r="1.6"/><circle cx="348.07" cy="435.70" r="1.6"/><circle cx="351.40" cy="435.30" r="1.6"/><circle cx="354.73" cy="434.90" r="1.6"/><circle cx="358.06" cy="435.50" r="1.6"/><circle cx="361.39" cy="435.10" r="1.6"/><circle cx="364.72" cy="435.70" r="1.6"/><circle cx="368.05" cy="435.30" r="1.6"/><circle cx="371.38" cy="434.90" r="1.6"/><circle cx="374.71" cy="435.50" r="1.6"/><circle cx="378.04" cy="435.10" r="1.6"/><circle cx="381.37" cy="435.70" r="1.6"/><circle cx="384.70" cy="435.30" r="1.6"/><circle cx="388.03" cy="434.90" r="1.6"/><circle cx="391.36" cy="435.50" r="1.6"/><circle cx="394.69" cy="435.10" r="1.6"/><circle cx="398.02" cy="435.70" r="1.6"/><circle cx="401.35" cy="435.30" r="1.6"/><circle cx="404.68" cy="434.90" r="1.6"/><circle cx="408.01" cy="435.50" r="1.6"/><circle cx="411.33" cy="435.10" r="1.6"/><circle cx="414.66" cy="435.70" r="1.6"/><circle cx="417.99" cy="435.30" r="1.6"/><circle cx="421.32" cy="434.90" r="1.6"/><circle cx="424.65" cy="435.50" r="1.6"/><circle cx="427.98" cy="435.10" r="1.6"/><circle cx="431.31" cy="435.70" r="1.6"/><circle cx="434.64" cy="435.30" r="1.6"/><circle cx="437.97" cy="434.90" r="1.6"/><circle cx="441.30" cy="435.50" r="1.6"/><circle cx="444.63" cy="435.10" r="1.6"/><circle cx="447.96" cy="435.70" r="1.6"/><circle cx="451.29" cy="435.30" r="1.6"/><circle cx="454.62" cy="434.90" r="1.6"/><circle cx="457.95" cy="435.50" r="1.6"/></g><g stroke="#cccccc" stroke-width="1" fill="none"><line x1="528.5" y1="311.5" x2="951.5" y2="311.5"/><line x1="528.5" y1="344.5" x2="951.5" y2="344.5"/><line x1="528.5" y1="377.5" x2="951.5" y2="377.5"/><line x1="528.5" y1="410.5" x2="951.5" y2="410.5"/><line x1="528.5" y1="443.5" x2="951.5" y2="443.5"/><line x1="532.5" y1="311.5" x2="532.5" y2="443.5"/><line x1="604.5" y1="311.5" x2="604.5" y2="443.5"/><line x1="675.5" y1="311.5" x2="675.5" y2="443.5"/><line x1="747.5" y1="311.5" x2="747.5" y2="443.5"/><line x1="818.5" y1="311.5" x2="818.5" y2="443.5"/><line x1="890.5" y1="311.5" x2="890.5" y2="443.5"/><line x1="528.5" y1="311.5" x2="528.5" y2="443.5"/><line x1="951.5" y1="311.5" x2="951.5" y2="443.5"/></g><g fill="#777777" font-size="11.5" letter-spacing="0.2"><text x="524.2" y="315.1" text-anchor="end">1</text><text x="524.2" y="348.1" text-anchor="end">0.5</text><text x="524.2" y="381.1" text-anchor="end">0</text><text x="524.2" y="414.1" text-anchor="end">-0.5</text><text x="524.2" y="447.1" text-anchor="end">-1</text><text x="532.9" y="458.7" text-anchor="middle">12:10</text><text x="604.4" y="458.7" text-anchor="middle">12:20</text><text x="676.0" y="458.7" text-anchor="middle">12:30</text><text x="747.5" y="458.7" text-anchor="middle">12:40</text><text x="819.1" y="458.7" text-anchor="middle">12:50</text><text x="890.6" y="458.7" text-anchor="middle">13:00</text></g><polyline points="529.05,377.50 532.63,377.50 536.20,377.50 539.78,377.50 543.35,377.50 546.93,377.50 550.50,377.50 554.08,377.50 557.65,377.50 561.23,377.50 564.80,377.50 568.38,377.50 571.96,377.50 575.53,377.50 579.11,377.50 582.68,377.50 586.26,377.50 589.83,377.50 593.41,377.50 596.98,377.50 600.56,377.50 604.13,377.50 607.71,377.50 611.28,377.50 614.86,377.50 618.44,377.50 622.01,377.50 625.59,377.50 629.16,377.50 632.74,377.50 636.31,377.50 639.89,377.50 643.46,377.50 647.04,377.50 650.61,377.50 654.19,377.50 657.77,377.50 661.34,377.50 664.92,377.50 668.49,377.50 672.07,377.50 675.64,377.50 679.22,377.50 682.79,377.50 686.37,377.50 689.94,377.50 693.52,377.50 697.09,377.50 700.67,377.50 704.25,377.50 707.82,377.50 711.40,377.50 714.97,377.50 718.55,377.50 722.12,377.50 725.70,377.50 729.27,377.50 732.85,377.50 736.42,377.50 740.00,377.50 743.58,377.50 747.15,377.50 750.73,377.50 754.30,377.50 757.88,377.50 761.45,377.50 765.03,377.50 768.60,377.50 772.18,377.50 775.75,377.50 779.33,377.50 782.91,377.50 786.48,377.50 790.06,377.50 793.63,377.50 797.21,377.50 800.78,377.50 804.36,377.50 807.93,377.50 811.51,377.50 815.08,377.50 818.66,377.50 822.23,377.50 825.81,377.50 829.39,377.50 832.96,377.50 836.54,377.50 840.11,377.50 843.69,377.50 847.26,377.50 850.84,377.50 854.41,377.50 857.99,377.50 861.56,377.50 865.14,377.50 868.72,377.50 872.29,377.50 875.87,377.50 879.44,377.50 883.02,377.50 886.59,377.50 890.17,377.50 893.74,377.50 897.32,377.50 900.89,377.50 904.47,377.50 908.04,377.50 911.62,377.50 915.20,377.50 918.77,377.50 922.35,377.50 925.92,377.50 929.50,377.50 933.07,377.50 936.65,377.50 940.22,377.50 943.80,377.50 947.37,377.50 950.95,377.50" fill="none" stroke="#e6397f" stroke-width="2.0" stroke-linejoin="round"/><g fill="#fff" fill-opacity="0.12" stroke="#e6397f" stroke-width="1.5"><circle cx="529.05" cy="377.50" r="1.6"/><circle cx="532.63" cy="377.50" r="1.6"/><circle cx="536.20" cy="377.50" r="1.6"/><circle cx="539.78" cy="377.50" r="1.6"/><circle cx="543.35" cy="377.50" r="1.6"/><circle cx="546.93" cy="377.50" r="1.6"/><circle cx="550.50" cy="377.50" r="1.6"/><circle cx="554.08" cy="377.50" r="1.6"/><circle cx="557.65" cy="377.50" r="1.6"/><circle cx="561.23" cy="377.50" r="1.6"/><circle cx="564.80" cy="377.50" r="1.6"/><circle cx="568.38" cy="377.50" r="1.6"/><circle cx="571.96" cy="377.50" r="1.6"/><circle cx="575.53" cy="377.50" r="1.6"/><circle cx="579.11" cy="377.50" r="1.6"/><circle cx="582.68" cy="377.50" r="1.6"/><circle cx="586.26" cy="377.50" r="1.6"/><circle cx="589.83" cy="377.50" r="1.6"/><circle cx="593.41" cy="377.50" r="1.6"/><circle cx="596.98" cy="377.50" r="1.6"/><circle cx="600.56" cy="377.50" r="1.6"/><circle cx="604.13" cy="377.50" r="1.6"/><circle cx="607.71" cy="377.50" r="1.6"/><circle cx="611.28" cy="377.50" r="1.6"/><circle cx="614.86" cy="377.50" r="1.6"/><circle cx="618.44" cy="377.50" r="1.6"/><circle cx="622.01" cy="377.50" r="1.6"/><circle cx="625.59" cy="377.50" r="1.6"/><circle cx="629.16" cy="377.50" r="1.6"/><circle cx="632.74" cy="377.50" r="1.6"/><circle cx="636.31" cy="377.50" r="1.6"/><circle cx="639.89" cy="377.50" r="1.6"/><circle cx="643.46" cy="377.50" r="1.6"/><circle cx="647.04" cy="377.50" r="1.6"/><circle cx="650.61" cy="377.50" r="1.6"/><circle cx="654.19" cy="377.50" r="1.6"/><circle cx="657.77" cy="377.50" r="1.6"/><circle cx="661.34" cy="377.50" r="1.6"/><circle cx="664.92" cy="377.50" r="1.6"/><circle cx="668.49" cy="377.50" r="1.6"/><circle cx="672.07" cy="377.50" r="1.6"/><circle cx="675.64" cy="377.50" r="1.6"/><circle cx="679.22" cy="377.50" r="1.6"/><circle cx="682.79" cy="377.50" r="1.6"/><circle cx="686.37" cy="377.50" r="1.6"/><circle cx="689.94" cy="377.50" r="1.6"/><circle cx="693.52" cy="377.50" r="1.6"/><circle cx="697.09" cy="377.50" r="1.6"/><circle cx="700.67" cy="377.50" r="1.6"/><circle cx="704.25" cy="377.50" r="1.6"/><circle cx="707.82" cy="377.50" r="1.6"/><circle cx="711.40" cy="377.50" r="1.6"/><circle cx="714.97" cy="377.50" r="1.6"/><circle cx="718.55" cy="377.50" r="1.6"/><circle cx="722.12" cy="377.50" r="1.6"/><circle cx="725.70" cy="377.50" r="1.6"/><circle cx="729.27" cy="377.50" r="1.6"/><circle cx="732.85" cy="377.50" r="1.6"/><circle cx="736.42" cy="377.50" r="1.6"/><circle cx="740.00" cy="377.50" r="1.6"/><circle cx="743.58" cy="377.50" r="1.6"/><circle cx="747.15" cy="377.50" r="1.6"/><circle cx="750.73" cy="377.50" r="1.6"/><circle cx="754.30" cy="377.50" r="1.6"/><circle cx="757.88" cy="377.50" r="1.6"/><circle cx="761.45" cy="377.50" r="1.6"/><circle cx="765.03" cy="377.50" r="1.6"/><circle cx="768.60" cy="377.50" r="1.6"/><circle cx="772.18" cy="377.50" r="1.6"/><circle cx="775.75" cy="377.50" r="1.6"/><circle cx="779.33" cy="377.50" r="1.6"/><circle cx="782.91" cy="377.50" r="1.6"/><circle cx="786.48" cy="377.50" r="1.6"/><circle cx="790.06" cy="377.50" r="1.6"/><circle cx="793.63" cy="377.50" r="1.6"/><circle cx="797.21" cy="377.50" r="1.6"/><circle cx="800.78" cy="377.50" r="1.6"/><circle cx="804.36" cy="377.50" r="1.6"/><circle cx="807.93" cy="377.50" r="1.6"/><circle cx="811.51" cy="377.50" r="1.6"/><circle cx="815.08" cy="377.50" r="1.6"/><circle cx="818.66" cy="377.50" r="1.6"/><circle cx="822.23" cy="377.50" r="1.6"/><circle cx="825.81" cy="377.50" r="1.6"/><circle cx="829.39" cy="377.50" r="1.6"/><circle cx="832.96" cy="377.50" r="1.6"/><circle cx="836.54" cy="377.50" r="1.6"/><circle cx="840.11" cy="377.50" r="1.6"/><circle cx="843.69" cy="377.50" r="1.6"/><circle cx="847.26" cy="377.50" r="1.6"/><circle cx="850.84" cy="377.50" r="1.6"/><circle cx="854.41" cy="377.50" r="1.6"/><circle cx="857.99" cy="377.50" r="1.6"/><circle cx="861.56" cy="377.50" r="1.6"/><circle cx="865.14" cy="377.50" r="1.6"/><circle cx="868.72" cy="377.50" r="1.6"/><circle cx="872.29" cy="377.50" r="1.6"/><circle cx="875.87" cy="377.50" r="1.6"/><circle cx="879.44" cy="377.50" r="1.6"/><circle cx="883.02" cy="377.50" r="1.6"/><circle cx="886.59" cy="377.50" r="1.6"/><circle cx="890.17" cy="377.50" r="1.6"/><circle cx="893.74" cy="377.50" r="1.6"/><circle cx="897.32" cy="377.50" r="1.6"/><circle cx="900.89" cy="377.50" r="1.6"/><circle cx="904.47" cy="377.50" r="1.6"/><circle cx="908.04" cy="377.50" r="1.6"/><circle cx="911.62" cy="377.50" r="1.6"/><circle cx="915.20" cy="377.50" r="1.6"/><circle cx="918.77" cy="377.50" r="1.6"/><circle cx="922.35" cy="377.50" r="1.6"/><circle cx="925.92" cy="377.50" r="1.6"/><circle cx="929.50" cy="377.50" r="1.6"/><circle cx="933.07" cy="377.50" r="1.6"/><circle cx="936.65" cy="377.50" r="1.6"/><circle cx="940.22" cy="377.50" r="1.6"/><circle cx="943.80" cy="377.50" r="1.6"/><circle cx="947.37" cy="377.50" r="1.6"/><circle cx="950.95" cy="377.50" r="1.6"/></g><g stroke="#cccccc" stroke-width="1" fill="none"><line x1="31.5" y1="526.5" x2="458.5" y2="526.5"/><line x1="31.5" y1="559.5" x2="458.5" y2="559.5"/><line x1="31.5" y1="592.5" x2="458.5" y2="592.5"/><line x1="31.5" y1="625.5" x2="458.5" y2="625.5"/><line x1="31.5" y1="658.5" x2="458.5" y2="658.5"/><line x1="35.5" y1="526.5" x2="35.5" y2="658.5"/><line x1="107.5" y1="526.5" x2="107.5" y2="658.5"/><line x1="180.5" y1="526.5" x2="180.5" y2="658.5"/><line x1="252.5" y1="526.5" x2="252.5" y2="658.5"/><line x1="324.5" y1="526.5" x2="324.5" y2="658.5"/><line x1="396.5" y1="526.5" x2="396.5" y2="658.5"/><line x1="31.5" y1="526.5" x2="31.5" y2="658.5"/><line x1="458.5" y1="526.5" x2="458.5" y2="658.5"/></g><g fill="#777777" font-size="11.5" letter-spacing="0.2"><text x="27.2" y="530.1" text-anchor="end">0.4</text><text x="27.2" y="563.1" text-anchor="end">0.3</text><text x="27.2" y="596.1" text-anchor="end">0.2</text><text x="27.2" y="629.1" text-anchor="end">0.1</text><text x="27.2" y="662.1" text-anchor="end">0</text><text x="35.9" y="673.7" text-anchor="middle">12:10</text><text x="108.1" y="673.7" text-anchor="middle">12:20</text><text x="180.4" y="673.7" text-anchor="middle">12:30</text><text x="252.6" y="673.7" text-anchor="middle">12:40</text><text x="324.8" y="673.7" text-anchor="middle">12:50</text><text x="397.1" y="673.7" text-anchor="middle">13:00</text></g><polyline points="32.05,636.05 35.66,644.36 39.27,649.91 42.88,653.23 46.49,655.08 50.10,629.59 53.71,636.98 57.32,647.14 60.92,650.83 64.53,564.39 68.14,571.78 71.75,590.80 75.36,605.58 78.97,607.42 82.58,618.51 86.19,633.28 89.80,643.44 93.41,648.98 97.02,627.74 100.63,591.35 104.24,601.51 107.85,604.65 111.46,616.66 115.06,632.36 118.67,642.89 122.28,648.06 125.89,652.68 129.50,629.59 133.11,613.89 136.72,617.95 140.33,612.60 143.94,596.71 147.55,620.35 151.16,610.75 154.77,624.97 158.38,618.51 161.99,624.05 165.59,594.12 169.20,603.73 172.81,599.11 176.42,622.20 180.03,636.05 183.64,644.73 187.25,649.91 190.86,653.23 194.47,655.08 198.08,542.78 201.69,552.01 205.30,569.56 208.91,603.73 212.52,601.88 216.13,618.51 219.73,633.28 223.34,622.20 226.95,600.96 230.56,597.26 234.17,617.58 237.78,631.44 241.39,644.36 245.00,648.98 248.61,652.68 252.22,654.15 255.83,655.45 259.44,630.51 263.05,636.05 266.66,567.34 270.27,571.78 273.87,605.58 277.48,623.12 281.09,614.81 284.70,626.82 288.31,613.33 291.92,630.51 295.53,641.59 299.14,648.06 302.75,652.12 306.36,628.66 309.97,636.98 313.58,645.29 317.19,650.28 320.80,627.74 324.41,634.21 328.01,644.36 331.62,649.35 335.23,627.74 338.84,634.76 342.45,644.36 346.06,649.35 349.67,626.82 353.28,637.90 356.89,623.12 360.50,625.89 364.11,638.82 367.72,646.21 371.33,650.83 374.94,653.60 378.54,655.45 382.15,629.59 385.76,638.82 389.37,647.14 392.98,651.20 396.59,628.66 400.20,631.07 403.81,639.75 407.42,624.05 411.03,631.99 414.64,640.67 418.25,648.06 421.86,652.12 425.47,628.89 429.08,631.65 432.68,620.77 436.29,623.91 439.90,611.00 443.51,603.25 447.12,598.45 450.73,621.69 454.34,532.61 457.95,575.58" fill="none" stroke="#e6397f" stroke-width="2.0" stroke-linejoin="round"/><g fill="#fff" fill-opacity="0.12" stroke="#e6397f" stroke-width="1.5"><circle cx="32.05" cy="636.05" r="1.6"/><circle cx="35.66" cy="644.36" r="1.6"/><circle cx="39.27" cy="649.91" r="1.6"/><circle cx="42.88" cy="653.23" r="1.6"/><circle cx="46.49" cy="655.08" r="1.6"/><circle cx="50.10" cy="629.59" r="1.6"/><circle cx="53.71" cy="636.98" r="1.6"/><circle cx="57.32" cy="647.14" r="1.6"/><circle cx="60.92" cy="650.83" r="1.6"/><circle cx="64.53" cy="564.39" r="1.6"/><circle cx="68.14" cy="571.78" r="1.6"/><circle cx="71.75" cy="590.80" r="1.6"/><circle cx="75.36" cy="605.58" r="1.6"/><circle cx="78.97" cy="607.42" r="1.6"/><circle cx="82.58" cy="618.51" r="1.6"/><circle cx="86.19" cy="633.28" r="1.6"/><circle cx="89.80" cy="643.44" r="1.6"/><circle cx="93.41" cy="648.98" r="1.6"/><circle cx="97.02" cy="627.74" r="1.6"/><circle cx="100.63" cy="591.35" r="1.6"/><circle cx="104.24" cy="601.51" r="1.6"/><circle cx="107.85" cy="604.65" r="1.6"/><circle cx="111.46" cy="616.66" r="1.6"/><circle cx="115.06" cy="632.36" r="1.6"/><circle cx="118.67" cy="642.89" r="1.6"/><circle cx="122.28" cy="648.06" r="1.6"/><circle cx="125.89" cy="652.68" r="1.6"/><circle cx="129.50" cy="629.59" r="1.6"/><circle cx="133.11" cy="613.89" r="1.6"/><circle cx="136.72" cy="617.95" r="1.6"/><circle cx="140.33" cy="612.60" r="1.6"/><circle cx="143.94" cy="596.71" r="1.6"/><circle cx="147.55" cy="620.35" r="1.6"/><circle cx="151.16" cy="610.75" r="1.6"/><circle cx="154.77" cy="624.97" r="1.6"/><circle cx="158.38" cy="618.51" r="1.6"/><circle cx="161.99" cy="624.05" r="1.6"/><circle cx="165.59" cy="594.12" r="1.6"/><circle cx="169.20" cy="603.73" r="1.6"/><circle cx="172.81" cy="599.11" r="1.6"/><circle cx="176.42" cy="622.20" r="1.6"/><circle cx="180.03" cy="636.05" r="1.6"/><circle cx="183.64" cy="644.73" r="1.6"/><circle cx="187.25" cy="649.91" r="1.6"/><circle cx="190.86" cy="653.23" r="1.6"/><circle cx="194.47" cy="655.08" r="1.6"/><circle cx="198.08" cy="542.78" r="1.6"/><circle cx="201.69" cy="552.01" r="1.6"/><circle cx="205.30" cy="569.56" r="1.6"/><circle cx="208.91" cy="603.73" r="1.6"/><circle cx="212.52" cy="601.88" r="1.6"/><circle cx="216.13" cy="618.51" r="1.6"/><circle cx="219.73" cy="633.28" r="1.6"/><circle cx="223.34" cy="622.20" r="1.6"/><circle cx="226.95" cy="600.96" r="1.6"/><circle cx="230.56" cy="597.26" r="1.6"/><circle cx="234.17" cy="617.58" r="1.6"/><circle cx="237.78" cy="631.44" r="1.6"/><circle cx="241.39" cy="644.36" r="1.6"/><circle cx="245.00" cy="648.98" r="1.6"/><circle cx="248.61" cy="652.68" r="1.6"/><circle cx="252.22" cy="654.15" r="1.6"/><circle cx="255.83" cy="655.45" r="1.6"/><circle cx="259.44" cy="630.51" r="1.6"/><circle cx="263.05" cy="636.05" r="1.6"/><circle cx="266.66" cy="567.34" r="1.6"/><circle cx="270.27" cy="571.78" r="1.6"/><circle cx="273.87" cy="605.58" r="1.6"/><circle cx="277.48" cy="623.12" r="1.6"/><circle cx="281.09" cy="614.81" r="1.6"/><circle cx="284.70" cy="626.82" r="1.6"/><circle cx="288.31" cy="613.33" r="1.6"/><circle cx="291.92" cy="630.51" r="1.6"/><circle cx="295.53" cy="641.59" r="1.6"/><circle cx="299.14" cy="648.06" r="1.6"/><circle cx="302.75" cy="652.12" r="1.6"/><circle cx="306.36" cy="628.66" r="1.6"/><circle cx="309.97" cy="636.98" r="1.6"/><circle cx="313.58" cy="645.29" r="1.6"/><circle cx="317.19" cy="650.28" r="1.6"/><circle cx="320.80" cy="627.74" r="1.6"/><circle cx="324.41" cy="634.21" r="1.6"/><circle cx="328.01" cy="644.36" r="1.6"/><circle cx="331.62" cy="649.35" r="1.6"/><circle cx="335.23" cy="627.74" r="1.6"/><circle cx="338.84" cy="634.76" r="1.6"/><circle cx="342.45" cy="644.36" r="1.6"/><circle cx="346.06" cy="649.35" r="1.6"/><circle cx="349.67" cy="626.82" r="1.6"/><circle cx="353.28" cy="637.90" r="1.6"/><circle cx="356.89" cy="623.12" r="1.6"/><circle cx="360.50" cy="625.89" r="1.6"/><circle cx="364.11" cy="638.82" r="1.6"/><circle cx="367.72" cy="646.21" r="1.6"/><circle cx="371.33" cy="650.83" r="1.6"/><circle cx="374.94" cy="653.60" r="1.6"/><circle cx="378.54" cy="655.45" r="1.6"/><circle cx="382.15" cy="629.59" r="1.6"/><circle cx="385.76" cy="638.82" r="1.6"/><circle cx="389.37" cy="647.14" r="1.6"/><circle cx="392.98" cy="651.20" r="1.6"/><circle cx="396.59" cy="628.66" r="1.6"/><circle cx="400.20" cy="631.07" r="1.6"/><circle cx="403.81" cy="639.75" r="1.6"/><circle cx="407.42" cy="624.05" r="1.6"/><circle cx="411.03" cy="631.99" r="1.6"/><circle cx="414.64" cy="640.67" r="1.6"/><circle cx="418.25" cy="648.06" r="1.6"/><circle cx="421.86" cy="652.12" r="1.6"/><circle cx="425.47" cy="628.89" r="1.6"/><circle cx="429.08" cy="631.65" r="1.6"/><circle cx="432.68" cy="620.77" r="1.6"/><circle cx="436.29" cy="623.91" r="1.6"/><circle cx="439.90" cy="611.00" r="1.6"/><circle cx="443.51" cy="603.25" r="1.6"/><circle cx="447.12" cy="598.45" r="1.6"/><circle cx="450.73" cy="621.69" r="1.6"/><circle cx="454.34" cy="532.61" r="1.6"/><circle cx="457.95" cy="575.58" r="1.6"/></g><polyline points="32.05,633.65 35.66,635.13 39.27,637.35 42.88,639.38 46.49,640.12 50.10,638.27 53.71,639.38 57.32,641.04 60.92,643.44 64.53,624.42 68.14,624.42 71.75,623.49 75.36,625.34 78.97,624.05 82.58,625.89 86.19,628.66 89.80,631.07 93.41,634.21 97.02,631.80 100.63,623.68 104.24,624.79 107.85,623.68 111.46,625.89 115.06,629.96 118.67,632.36 122.28,634.58 125.89,636.42 129.50,633.65 133.11,630.88 136.72,631.07 140.33,629.59 143.94,625.52 147.55,628.66 151.16,626.26 154.77,628.66 158.38,628.11 161.99,629.22 165.59,623.12 169.20,624.05 172.81,621.83 176.42,624.97 180.03,627.74 183.64,630.51 187.25,633.28 190.86,635.50 194.47,638.45 198.08,614.44 201.69,612.60 205.30,613.89 208.91,618.14 212.52,617.03 216.13,620.35 219.73,624.05 223.34,623.68 226.95,619.43 230.56,617.95 234.17,622.20 237.78,625.52 241.39,628.66 245.00,632.36 248.61,635.13 252.22,637.35 255.83,638.45 259.44,634.76 263.05,636.05 266.66,621.83 270.27,619.80 273.87,623.12 277.48,626.82 281.09,624.97 284.70,626.82 288.31,624.05 291.92,627.74 295.53,629.96 299.14,632.36 302.75,635.13 306.36,632.91 309.97,634.21 313.58,636.05 317.19,637.90 320.80,635.50 324.41,636.42 328.01,638.45 331.62,640.12 335.23,637.90 338.84,638.82 342.45,640.30 346.06,641.59 349.67,638.82 353.28,639.75 356.89,638.27 360.50,638.45 364.11,640.67 367.72,642.52 371.33,644.00 374.94,644.92 378.54,646.21 382.15,642.52 385.76,643.44 389.37,644.36 392.98,645.66 396.59,641.59 400.20,642.15 403.81,644.36 407.42,639.75 411.03,640.67 414.64,642.52 418.25,644.36 421.86,645.29 425.47,640.50 429.08,640.14 432.68,638.66 436.29,639.21 439.90,635.34 443.51,632.57 447.12,629.07 450.73,632.21 454.34,613.21 457.95,616.90" fill="none" stroke="#3066a8" stroke-width="2.0" stroke-linejoin="round"/><g fill="#fff" fill-opacity="0.12" stroke="#3066a8" stroke-width="1.5"><circle cx="32.05" cy="633.65" r="1.6"/><circle cx="35.66" cy="635.13" r="1.6"/><circle cx="39.27" cy="637.35" r="1.6"/><circle cx="42.88" cy="639.38" r="1.6"/><circle cx="46.49" cy="640.12" r="1.6"/><circle cx="50.10" cy="638.27" r="1.6"/><circle cx="53.71" cy="639.38" r="1.6"/><circle cx="57.32" cy="641.04" r="1.6"/><circle cx="60.92" cy="643.44" r="1.6"/><circle cx="64.53" cy="624.42" r="1.6"/><circle cx="68.14" cy="624.42" r="1.6"/><circle cx="71.75" cy="623.49" r="1.6"/><circle cx="75.36" cy="625.34" r="1.6"/><circle cx="78.97" cy="624.05" r="1.6"/><circle cx="82.58" cy="625.89" r="1.6"/><circle cx="86.19" cy="628.66" r="1.6"/><circle cx="89.80" cy="631.07" r="1.6"/><circle cx="93.41" cy="634.21" r="1.6"/><circle cx="97.02" cy="631.80" r="1.6"/><circle cx="100.63" cy="623.68" r="1.6"/><circle cx="104.24" cy="624.79" r="1.6"/><circle cx="107.85" cy="623.68" r="1.6"/><circle cx="111.46" cy="625.89" r="1.6"/><circle cx="115.06" cy="629.96" r="1.6"/><circle cx="118.67" cy="632.36" r="1.6"/><circle cx="122.28" cy="634.58" r="1.6"/><circle cx="125.89" cy="636.42" r="1.6"/><circle cx="129.50" cy="633.65" r="1.6"/><circle cx="133.11" cy="630.88" r="1.6"/><circle cx="136.72" cy="631.07" r="1.6"/><circle cx="140.33" cy="629.59" r="1.6"/><circle cx="143.94" cy="625.52" r="1.6"/><circle cx="147.55" cy="628.66" r="1.6"/><circle cx="151.16" cy="626.26" r="1.6"/><circle cx="154.77" cy="628.66" r="1.6"/><circle cx="158.38" cy="628.11" r="1.6"/><circle cx="161.99" cy="629.22" r="1.6"/><circle cx="165.59" cy="623.12" r="1.6"/><circle cx="169.20" cy="624.05" r="1.6"/><circle cx="172.81" cy="621.83" r="1.6"/><circle cx="176.42" cy="624.97" r="1.6"/><circle cx="180.03" cy="627.74" r="1.6"/><circle cx="183.64" cy="630.51" r="1.6"/><circle cx="187.25" cy="633.28" r="1.6"/><circle cx="190.86" cy="635.50" r="1.6"/><circle cx="194.47" cy="638.45" r="1.6"/><circle cx="198.08" cy="614.44" r="1.6"/><circle cx="201.69" cy="612.60" r="1.6"/><circle cx="205.30" cy="613.89" r="1.6"/><circle cx="208.91" cy="618.14" r="1.6"/><circle cx="212.52" cy="617.03" r="1.6"/><circle cx="216.13" cy="620.35" r="1.6"/><circle cx="219.73" cy="624.05" r="1.6"/><circle cx="223.34" cy="623.68" r="1.6"/><circle cx="226.95" cy="619.43" r="1.6"/><circle cx="230.56" cy="617.95" r="1.6"/><circle cx="234.17" cy="622.20" r="1.6"/><circle cx="237.78" cy="625.52" r="1.6"/><circle cx="241.39" cy="628.66" r="1.6"/><circle cx="245.00" cy="632.36" r="1.6"/><circle cx="248.61" cy="635.13" r="1.6"/><circle cx="252.22" cy="637.35" r="1.6"/><circle cx="255.83" cy="638.45" r="1.6"/><circle cx="259.44" cy="634.76" r="1.6"/><circle cx="263.05" cy="636.05" r="1.6"/><circle cx="266.66" cy="621.83" r="1.6"/><circle cx="270.27" cy="619.80" r="1.6"/><circle cx="273.87" cy="623.12" r="1.6"/><circle cx="277.48" cy="626.82" r="1.6"/><circle cx="281.09" cy="624.97" r="1.6"/><circle cx="284.70" cy="626.82" r="1.6"/><circle cx="288.31" cy="624.05" r="1.6"/><circle cx="291.92" cy="627.74" r="1.6"/><circle cx="295.53" cy="629.96" r="1.6"/><circle cx="299.14" cy="632.36" r="1.6"/><circle cx="302.75" cy="635.13" r="1.6"/><circle cx="306.36" cy="632.91" r="1.6"/><circle cx="309.97" cy="634.21" r="1.6"/><circle cx="313.58" cy="636.05" r="1.6"/><circle cx="317.19" cy="637.90" r="1.6"/><circle cx="320.80" cy="635.50" r="1.6"/><circle cx="324.41" cy="636.42" r="1.6"/><circle cx="328.01" cy="638.45" r="1.6"/><circle cx="331.62" cy="640.12" r="1.6"/><circle cx="335.23" cy="637.90" r="1.6"/><circle cx="338.84" cy="638.82" r="1.6"/><circle cx="342.45" cy="640.30" r="1.6"/><circle cx="346.06" cy="641.59" r="1.6"/><circle cx="349.67" cy="638.82" r="1.6"/><circle cx="353.28" cy="639.75" r="1.6"/><circle cx="356.89" cy="638.27" r="1.6"/><circle cx="360.50" cy="638.45" r="1.6"/><circle cx="364.11" cy="640.67" r="1.6"/><circle cx="367.72" cy="642.52" r="1.6"/><circle cx="371.33" cy="644.00" r="1.6"/><circle cx="374.94" cy="644.92" r="1.6"/><circle cx="378.54" cy="646.21" r="1.6"/><circle cx="382.15" cy="642.52" r="1.6"/><circle cx="385.76" cy="643.44" r="1.6"/><circle cx="389.37" cy="644.36" r="1.6"/><circle cx="392.98" cy="645.66" r="1.6"/><circle cx="396.59" cy="641.59" r="1.6"/><circle cx="400.20" cy="642.15" r="1.6"/><circle cx="403.81" cy="644.36" r="1.6"/><circle cx="407.42" cy="639.75" r="1.6"/><circle cx="411.03" cy="640.67" r="1.6"/><circle cx="414.64" cy="642.52" r="1.6"/><circle cx="418.25" cy="644.36" r="1.6"/><circle cx="421.86" cy="645.29" r="1.6"/><circle cx="425.47" cy="640.50" r="1.6"/><circle cx="429.08" cy="640.14" r="1.6"/><circle cx="432.68" cy="638.66" r="1.6"/><circle cx="436.29" cy="639.21" r="1.6"/><circle cx="439.90" cy="635.34" r="1.6"/><circle cx="443.51" cy="632.57" r="1.6"/><circle cx="447.12" cy="629.07" r="1.6"/><circle cx="450.73" cy="632.21" r="1.6"/><circle cx="454.34" cy="613.21" r="1.6"/><circle cx="457.95" cy="616.90" r="1.6"/></g><polyline points="32.05,641.04 35.66,642.52 39.27,643.07 42.88,643.44 46.49,642.89 50.10,641.41 53.71,642.15 57.32,642.89 60.92,643.81 64.53,636.61 68.14,636.61 71.75,636.05 75.36,636.61 78.97,636.42 82.58,637.35 86.19,638.45 89.80,639.38 93.41,640.12 97.02,639.75 100.63,637.35 104.24,637.35 107.85,636.98 111.46,637.90 115.06,638.82 118.67,639.75 122.28,640.67 125.89,641.22 129.50,641.04 133.11,640.30 136.72,640.30 140.33,639.93 143.94,638.82 147.55,639.75 151.16,639.19 154.77,639.93 158.38,639.75 161.99,639.75 165.59,638.27 169.20,638.45 172.81,637.90 176.42,638.82 180.03,639.75 183.64,641.04 187.25,641.96 190.86,642.89 194.47,643.44 198.08,634.21 201.69,633.65 205.30,634.21 208.91,634.76 212.52,634.39 216.13,635.13 219.73,636.05 223.34,635.68 226.95,634.58 230.56,633.84 234.17,634.76 237.78,636.05 241.39,636.98 245.00,638.27 248.61,639.19 252.22,639.75 255.83,640.30 259.44,639.75 263.05,640.12 266.66,635.50 270.27,636.05 273.87,636.61 277.48,637.35 281.09,636.98 284.70,637.35 288.31,636.98 291.92,637.90 295.53,638.45 299.14,639.75 302.75,640.67 306.36,640.12 309.97,640.67 313.58,641.22 317.19,641.96 320.80,641.04 324.41,641.59 328.01,641.96 331.62,642.52 335.23,641.22 338.84,641.59 342.45,642.15 346.06,642.89 349.67,641.04 353.28,641.59 356.89,640.67 360.50,641.04 364.11,641.59 367.72,642.89 371.33,643.44 374.94,644.00 378.54,644.36 382.15,641.96 385.76,642.52 389.37,643.44 392.98,644.00 396.59,641.22 400.20,641.59 403.81,642.52 407.42,641.04 411.03,641.59 414.64,642.52 418.25,643.44 421.86,644.00 425.47,640.87 429.08,641.43 432.68,640.87 436.29,640.50 439.90,639.95 443.51,639.21 447.12,638.66 450.73,639.58 454.34,633.50 457.95,634.60" fill="none" stroke="#2ea556" stroke-width="2.0" stroke-linejoin="round"/><g fill="#fff" fill-opacity="0.12" stroke="#2ea556" stroke-width="1.5"><circle cx="32.05" cy="641.04" r="1.6"/><circle cx="35.66" cy="642.52" r="1.6"/><circle cx="39.27" cy="643.07" r="1.6"/><circle cx="42.88" cy="643.44" r="1.6"/><circle cx="46.49" cy="642.89" r="1.6"/><circle cx="50.10" cy="641.41" r="1.6"/><circle cx="53.71" cy="642.15" r="1.6"/><circle cx="57.32" cy="642.89" r="1.6"/><circle cx="60.92" cy="643.81" r="1.6"/><circle cx="64.53" cy="636.61" r="1.6"/><circle cx="68.14" cy="636.61" r="1.6"/><circle cx="71.75" cy="636.05" r="1.6"/><circle cx="75.36" cy="636.61" r="1.6"/><circle cx="78.97" cy="636.42" r="1.6"/><circle cx="82.58" cy="637.35" r="1.6"/><circle cx="86.19" cy="638.45" r="1.6"/><circle cx="89.80" cy="639.38" r="1.6"/><circle cx="93.41" cy="640.12" r="1.6"/><circle cx="97.02" cy="639.75" r="1.6"/><circle cx="100.63" cy="637.35" r="1.6"/><circle cx="104.24" cy="637.35" r="1.6"/><circle cx="107.85" cy="636.98" r="1.6"/><circle cx="111.46" cy="637.90" r="1.6"/><circle cx="115.06" cy="638.82" r="1.6"/><circle cx="118.67" cy="639.75" r="1.6"/><circle cx="122.28" cy="640.67" r="1.6"/><circle cx="125.89" cy="641.22" r="1.6"/><circle cx="129.50" cy="641.04" r="1.6"/><circle cx="133.11" cy="640.30" r="1.6"/><circle cx="136.72" cy="640.30" r="1.6"/><circle cx="140.33" cy="639.93" r="1.6"/><circle cx="143.94" cy="638.82" r="1.6"/><circle cx="147.55" cy="639.75" r="1.6"/><circle cx="151.16" cy="639.19" r="1.6"/><circle cx="154.77" cy="639.93" r="1.6"/><circle cx="158.38" cy="639.75" r="1.6"/><circle cx="161.99" cy="639.75" r="1.6"/><circle cx="165.59" cy="638.27" r="1.6"/><circle cx="169.20" cy="638.45" r="1.6"/><circle cx="172.81" cy="637.90" r="1.6"/><circle cx="176.42" cy="638.82" r="1.6"/><circle cx="180.03" cy="639.75" r="1.6"/><circle cx="183.64" cy="641.04" r="1.6"/><circle cx="187.25" cy="641.96" r="1.6"/><circle cx="190.86" cy="642.89" r="1.6"/><circle cx="194.47" cy="643.44" r="1.6"/><circle cx="198.08" cy="634.21" r="1.6"/><circle cx="201.69" cy="633.65" r="1.6"/><circle cx="205.30" cy="634.21" r="1.6"/><circle cx="208.91" cy="634.76" r="1.6"/><circle cx="212.52" cy="634.39" r="1.6"/><circle cx="216.13" cy="635.13" r="1.6"/><circle cx="219.73" cy="636.05" r="1.6"/><circle cx="223.34" cy="635.68" r="1.6"/><circle cx="226.95" cy="634.58" r="1.6"/><circle cx="230.56" cy="633.84" r="1.6"/><circle cx="234.17" cy="634.76" r="1.6"/><circle cx="237.78" cy="636.05" r="1.6"/><circle cx="241.39" cy="636.98" r="1.6"/><circle cx="245.00" cy="638.27" r="1.6"/><circle cx="248.61" cy="639.19" r="1.6"/><circle cx="252.22" cy="639.75" r="1.6"/><circle cx="255.83" cy="640.30" r="1.6"/><circle cx="259.44" cy="639.75" r="1.6"/><circle cx="263.05" cy="640.12" r="1.6"/><circle cx="266.66" cy="635.50" r="1.6"/><circle cx="270.27" cy="636.05" r="1.6"/><circle cx="273.87" cy="636.61" r="1.6"/><circle cx="277.48" cy="637.35" r="1.6"/><circle cx="281.09" cy="636.98" r="1.6"/><circle cx="284.70" cy="637.35" r="1.6"/><circle cx="288.31" cy="636.98" r="1.6"/><circle cx="291.92" cy="637.90" r="1.6"/><circle cx="295.53" cy="638.45" r="1.6"/><circle cx="299.14" cy="639.75" r="1.6"/><circle cx="302.75" cy="640.67" r="1.6"/><circle cx="306.36" cy="640.12" r="1.6"/><circle cx="309.97" cy="640.67" r="1.6"/><circle cx="313.58" cy="641.22" r="1.6"/><circle cx="317.19" cy="641.96" r="1.6"/><circle cx="320.80" cy="641.04" r="1.6"/><circle cx="324.41" cy="641.59" r="1.6"/><circle cx="328.01" cy="641.96" r="1.6"/><circle cx="331.62" cy="642.52" r="1.6"/><circle cx="335.23" cy="641.22" r="1.6"/><circle cx="338.84" cy="641.59" r="1.6"/><circle cx="342.45" cy="642.15" r="1.6"/><circle cx="346.06" cy="642.89" r="1.6"/><circle cx="349.67" cy="641.04" r="1.6"/><circle cx="353.28" cy="641.59" r="1.6"/><circle cx="356.89" cy="640.67" r="1.6"/><circle cx="360.50" cy="641.04" r="1.6"/><circle cx="364.11" cy="641.59" r="1.6"/><circle cx="367.72" cy="642.89" r="1.6"/><circle cx="371.33" cy="643.44" r="1.6"/><circle cx="374.94" cy="644.00" r="1.6"/><circle cx="378.54" cy="644.36" r="1.6"/><circle cx="382.15" cy="641.96" r="1.6"/><circle cx="385.76" cy="642.52" r="1.6"/><circle cx="389.37" cy="643.44" r="1.6"/><circle cx="392.98" cy="644.00" r="1.6"/><circle cx="396.59" cy="641.22" r="1.6"/><circle cx="400.20" cy="641.59" r="1.6"/><circle cx="403.81" cy="642.52" r="1.6"/><circle cx="407.42" cy="641.04" r="1.6"/><circle cx="411.03" cy="641.59" r="1.6"/><circle cx="414.64" cy="642.52" r="1.6"/><circle cx="418.25" cy="643.44" r="1.6"/><circle cx="421.86" cy="644.00" r="1.6"/><circle cx="425.47" cy="640.87" r="1.6"/><circle cx="429.08" cy="641.43" r="1.6"/><circle cx="432.68" cy="640.87" r="1.6"/><circle cx="436.29" cy="640.50" r="1.6"/><circle cx="439.90" cy="639.95" r="1.6"/><circle cx="443.51" cy="639.21" r="1.6"/><circle cx="447.12" cy="638.66" r="1.6"/><circle cx="450.73" cy="639.58" r="1.6"/><circle cx="454.34" cy="633.50" r="1.6"/><circle cx="457.95" cy="634.60" r="1.6"/></g><g stroke="#cccccc" stroke-width="1" fill="none"><line x1="539.5" y1="526.5" x2="951.5" y2="526.5"/><line x1="539.5" y1="559.5" x2="951.5" y2="559.5"/><line x1="539.5" y1="592.5" x2="951.5" y2="592.5"/><line x1="539.5" y1="625.5" x2="951.5" y2="625.5"/><line x1="539.5" y1="658.5" x2="951.5" y2="658.5"/><line x1="543.5" y1="526.5" x2="543.5" y2="658.5"/><line x1="613.5" y1="526.5" x2="613.5" y2="658.5"/><line x1="682.5" y1="526.5" x2="682.5" y2="658.5"/><line x1="752.5" y1="526.5" x2="752.5" y2="658.5"/><line x1="822.5" y1="526.5" x2="822.5" y2="658.5"/><line x1="891.5" y1="526.5" x2="891.5" y2="658.5"/><line x1="539.5" y1="526.5" x2="539.5" y2="658.5"/><line x1="951.5" y1="526.5" x2="951.5" y2="658.5"/></g><g fill="#777777" font-size="11.5" letter-spacing="0.2"><text x="535.2" y="530.1" text-anchor="end">80 ms</text><text x="535.2" y="563.1" text-anchor="end">60 ms</text><text x="535.2" y="596.1" text-anchor="end">40 ms</text><text x="535.2" y="629.1" text-anchor="end">20 ms</text><text x="535.2" y="662.1" text-anchor="end">0 ms</text><text x="543.8" y="673.7" text-anchor="middle">12:10</text><text x="613.4" y="673.7" text-anchor="middle">12:20</text><text x="683.1" y="673.7" text-anchor="middle">12:30</text><text x="752.8" y="673.7" text-anchor="middle">12:40</text><text x="822.5" y="673.7" text-anchor="middle">12:50</text><text x="892.2" y="673.7" text-anchor="middle">13:00</text></g><polyline points="540.05,657.20 543.53,657.20 547.01,568.00 550.50,657.20 553.98,657.20 557.46,657.20 560.94,657.20 564.43,657.20 567.91,572.90 571.39,657.20 574.87,657.20 578.35,657.20 581.84,657.20 585.32,657.20 588.80,656.40 592.28,657.20 595.77,656.40 599.25,654.60 602.73,657.20 606.21,657.20 609.69,656.40 613.18,657.20 616.66,657.20 620.14,657.20 623.62,657.20 627.11,657.20 630.59,657.20 634.07,657.20 637.55,654.60 641.03,657.20 644.52,654.30 648.00,654.30 651.48,657.20 654.96,656.40 658.44,653.70 661.93,657.20 665.41,656.00 668.89,657.20 672.37,657.20 675.86,657.20 679.34,657.20 682.82,657.20 686.30,657.20 689.78,657.20 693.27,654.60 696.75,561.00 700.23,657.20 703.71,657.20 707.20,657.20 710.68,657.20 714.16,657.20 717.64,558.40 721.12,657.20 724.61,657.20 728.09,657.20 731.57,657.20 735.05,657.20 738.54,657.20 742.02,657.20 745.50,657.20 748.98,657.20 752.46,657.20 755.95,657.20 759.43,657.20 762.91,657.20 766.39,657.20 769.88,657.20 773.36,657.20 776.84,657.20 780.32,657.20 783.80,570.60 787.29,657.20 790.77,657.20 794.25,657.20 797.73,657.20 801.22,657.20 804.70,565.30 808.18,657.20 811.66,657.20 815.14,657.20 818.63,657.20 822.11,657.20 825.59,657.20 829.07,657.20 832.56,654.20 836.04,656.00 839.52,657.20 843.00,657.20 846.48,655.40 849.97,657.20 853.45,657.20 856.93,657.20 860.41,657.20 863.89,657.20 867.38,568.00 870.86,657.20 874.34,657.20 877.82,657.20 881.31,657.20 884.79,657.20 888.27,568.80 891.75,657.20 895.23,657.20 898.72,657.20 902.20,657.20 905.68,657.20 909.16,657.20 912.65,657.20 916.13,657.20 919.61,657.20 923.09,657.20 926.57,657.20 930.06,657.20 933.54,657.20 937.02,657.20 940.50,657.20 943.99,657.20 947.47,657.20 950.95,657.20" fill="none" stroke="#e6397f" stroke-width="2.0" stroke-linejoin="round"/><g fill="#fff" fill-opacity="0.12" stroke="#e6397f" stroke-width="1.5"><circle cx="540.05" cy="657.20" r="1.6"/><circle cx="543.53" cy="657.20" r="1.6"/><circle cx="547.01" cy="568.00" r="1.6"/><circle cx="550.50" cy="657.20" r="1.6"/><circle cx="553.98" cy="657.20" r="1.6"/><circle cx="557.46" cy="657.20" r="1.6"/><circle cx="560.94" cy="657.20" r="1.6"/><circle cx="564.43" cy="657.20" r="1.6"/><circle cx="567.91" cy="572.90" r="1.6"/><circle cx="571.39" cy="657.20" r="1.6"/><circle cx="574.87" cy="657.20" r="1.6"/><circle cx="578.35" cy="657.20" r="1.6"/><circle cx="581.84" cy="657.20" r="1.6"/><circle cx="585.32" cy="657.20" r="1.6"/><circle cx="588.80" cy="656.40" r="1.6"/><circle cx="592.28" cy="657.20" r="1.6"/><circle cx="595.77" cy="656.40" r="1.6"/><circle cx="599.25" cy="654.60" r="1.6"/><circle cx="602.73" cy="657.20" r="1.6"/><circle cx="606.21" cy="657.20" r="1.6"/><circle cx="609.69" cy="656.40" r="1.6"/><circle cx="613.18" cy="657.20" r="1.6"/><circle cx="616.66" cy="657.20" r="1.6"/><circle cx="620.14" cy="657.20" r="1.6"/><circle cx="623.62" cy="657.20" r="1.6"/><circle cx="627.11" cy="657.20" r="1.6"/><circle cx="630.59" cy="657.20" r="1.6"/><circle cx="634.07" cy="657.20" r="1.6"/><circle cx="637.55" cy="654.60" r="1.6"/><circle cx="641.03" cy="657.20" r="1.6"/><circle cx="644.52" cy="654.30" r="1.6"/><circle cx="648.00" cy="654.30" r="1.6"/><circle cx="651.48" cy="657.20" r="1.6"/><circle cx="654.96" cy="656.40" r="1.6"/><circle cx="658.44" cy="653.70" r="1.6"/><circle cx="661.93" cy="657.20" r="1.6"/><circle cx="665.41" cy="656.00" r="1.6"/><circle cx="668.89" cy="657.20" r="1.6"/><circle cx="672.37" cy="657.20" r="1.6"/><circle cx="675.86" cy="657.20" r="1.6"/><circle cx="679.34" cy="657.20" r="1.6"/><circle cx="682.82" cy="657.20" r="1.6"/><circle cx="686.30" cy="657.20" r="1.6"/><circle cx="689.78" cy="657.20" r="1.6"/><circle cx="693.27" cy="654.60" r="1.6"/><circle cx="696.75" cy="561.00" r="1.6"/><circle cx="700.23" cy="657.20" r="1.6"/><circle cx="703.71" cy="657.20" r="1.6"/><circle cx="707.20" cy="657.20" r="1.6"/><circle cx="710.68" cy="657.20" r="1.6"/><circle cx="714.16" cy="657.20" r="1.6"/><circle cx="717.64" cy="558.40" r="1.6"/><circle cx="721.12" cy="657.20" r="1.6"/><circle cx="724.61" cy="657.20" r="1.6"/><circle cx="728.09" cy="657.20" r="1.6"/><circle cx="731.57" cy="657.20" r="1.6"/><circle cx="735.05" cy="657.20" r="1.6"/><circle cx="738.54" cy="657.20" r="1.6"/><circle cx="742.02" cy="657.20" r="1.6"/><circle cx="745.50" cy="657.20" r="1.6"/><circle cx="748.98" cy="657.20" r="1.6"/><circle cx="752.46" cy="657.20" r="1.6"/><circle cx="755.95" cy="657.20" r="1.6"/><circle cx="759.43" cy="657.20" r="1.6"/><circle cx="762.91" cy="657.20" r="1.6"/><circle cx="766.39" cy="657.20" r="1.6"/><circle cx="769.88" cy="657.20" r="1.6"/><circle cx="773.36" cy="657.20" r="1.6"/><circle cx="776.84" cy="657.20" r="1.6"/><circle cx="780.32" cy="657.20" r="1.6"/><circle cx="783.80" cy="570.60" r="1.6"/><circle cx="787.29" cy="657.20" r="1.6"/><circle cx="790.77" cy="657.20" r="1.6"/><circle cx="794.25" cy="657.20" r="1.6"/><circle cx="797.73" cy="657.20" r="1.6"/><circle cx="801.22" cy="657.20" r="1.6"/><circle cx="804.70" cy="565.30" r="1.6"/><circle cx="808.18" cy="657.20" r="1.6"/><circle cx="811.66" cy="657.20" r="1.6"/><circle cx="815.14" cy="657.20" r="1.6"/><circle cx="818.63" cy="657.20" r="1.6"/><circle cx="822.11" cy="657.20" r="1.6"/><circle cx="825.59" cy="657.20" r="1.6"/><circle cx="829.07" cy="657.20" r="1.6"/><circle cx="832.56" cy="654.20" r="1.6"/><circle cx="836.04" cy="656.00" r="1.6"/><circle cx="839.52" cy="657.20" r="1.6"/><circle cx="843.00" cy="657.20" r="1.6"/><circle cx="846.48" cy="655.40" r="1.6"/><circle cx="849.97" cy="657.20" r="1.6"/><circle cx="853.45" cy="657.20" r="1.6"/><circle cx="856.93" cy="657.20" r="1.6"/><circle cx="860.41" cy="657.20" r="1.6"/><circle cx="863.89" cy="657.20" r="1.6"/><circle cx="867.38" cy="568.00" r="1.6"/><circle cx="870.86" cy="657.20" r="1.6"/><circle cx="874.34" cy="657.20" r="1.6"/><circle cx="877.82" cy="657.20" r="1.6"/><circle cx="881.31" cy="657.20" r="1.6"/><circle cx="884.79" cy="657.20" r="1.6"/><circle cx="888.27" cy="568.80" r="1.6"/><circle cx="891.75" cy="657.20" r="1.6"/><circle cx="895.23" cy="657.20" r="1.6"/><circle cx="898.72" cy="657.20" r="1.6"/><circle cx="902.20" cy="657.20" r="1.6"/><circle cx="905.68" cy="657.20" r="1.6"/><circle cx="909.16" cy="657.20" r="1.6"/><circle cx="912.65" cy="657.20" r="1.6"/><circle cx="916.13" cy="657.20" r="1.6"/><circle cx="919.61" cy="657.20" r="1.6"/><circle cx="923.09" cy="657.20" r="1.6"/><circle cx="926.57" cy="657.20" r="1.6"/><circle cx="930.06" cy="657.20" r="1.6"/><circle cx="933.54" cy="657.20" r="1.6"/><circle cx="937.02" cy="657.20" r="1.6"/><circle cx="940.50" cy="657.20" r="1.6"/><circle cx="943.99" cy="657.20" r="1.6"/><circle cx="947.47" cy="657.20" r="1.6"/><circle cx="950.95" cy="657.20" r="1.6"/></g></svg>
<div class="title" style="left:10px;top:68.0px">Client Requests</div><svg class="info" style="left:444px;top:74.0px" width="14" height="14" viewBox="0 0 14 14"><circle cx="7" cy="7" r="6.9" fill="#2b7fa3"/><rect x="5.9" y="2.2" width="2.2" height="1.9" fill="#fff"/><path d="M4.9 5.3H8.1V10.1H9V11.8H4.9V10.1H5.9V7H4.9Z" fill="#fff"/></svg><div class="dot" style="left:10.0px;top:253.9px;background:#e6397f"></div><div class="leg" style="left:23.6px;top:251.0px">Client Requests 6</div><div class="title" style="left:503.5px;top:68.0px">Client Response Time (ms)</div><svg class="info" style="left:937px;top:74.0px" width="14" height="14" viewBox="0 0 14 14"><circle cx="7" cy="7" r="6.9" fill="#2b7fa3"/><rect x="5.9" y="2.2" width="2.2" height="1.9" fill="#fff"/><path d="M4.9 5.3H8.1V10.1H9V11.8H4.9V10.1H5.9V7H4.9Z" fill="#fff"/></svg><div class="dot" style="left:502.9px;top:253.9px;background:#e6397f"></div><div class="leg" style="left:516.0px;top:251.0px">Max 177 ms</div><div class="dot" style="left:667.3px;top:253.9px;background:#3066a8"></div><div class="leg" style="left:680.4px;top:251.0px">Average 156 ms</div><div class="title" style="left:10px;top:283.0px">Memory Size (GB)</div><svg class="info" style="left:444px;top:289.0px" width="14" height="14" viewBox="0 0 14 14"><circle cx="7" cy="7" r="6.9" fill="#2b7fa3"/><rect x="5.9" y="2.2" width="2.2" height="1.9" fill="#fff"/><path d="M4.9 5.3H8.1V10.1H9V11.8H4.9V10.1H5.9V7H4.9Z" fill="#fff"/></svg><div class="dot" style="left:10.0px;top:468.9px;background:#e6397f"></div><div class="leg" style="left:23.6px;top:466.0px">Heap Size Limit 1.4 GB</div><div class="dot" style="left:174.4px;top:468.9px;background:#3066a8"></div><div class="leg" style="left:188.0px;top:466.0px">Memory Size 109.1 MB</div><div class="title" style="left:503.5px;top:283.0px">HTTP Connections</div><svg class="info" style="left:937px;top:289.0px" width="14" height="14" viewBox="0 0 14 14"><circle cx="7" cy="7" r="6.9" fill="#2b7fa3"/><rect x="5.9" y="2.2" width="2.2" height="1.9" fill="#fff"/><path d="M4.9 5.3H8.1V10.1H9V11.8H4.9V10.1H5.9V7H4.9Z" fill="#fff"/></svg><div class="dot" style="left:502.9px;top:468.9px;background:#e6397f"></div><div class="leg" style="left:516.0px;top:466.0px">HTTP Connections 0</div><div class="title" style="left:10px;top:498.0px">System Load</div><svg class="info" style="left:444px;top:504.0px" width="14" height="14" viewBox="0 0 14 14"><circle cx="7" cy="7" r="6.9" fill="#2b7fa3"/><rect x="5.9" y="2.2" width="2.2" height="1.9" fill="#fff"/><path d="M4.9 5.3H8.1V10.1H9V11.8H4.9V10.1H5.9V7H4.9Z" fill="#fff"/></svg><div class="dot" style="left:10.0px;top:683.9px;background:#e6397f"></div><div class="leg" style="left:23.6px;top:681.0px">1m 0.25</div><div class="dot" style="left:174.4px;top:683.9px;background:#3066a8"></div><div class="leg" style="left:188.0px;top:681.0px">5m 0.13</div><div class="dot" style="left:338.8px;top:683.9px;background:#2ea556"></div><div class="leg" style="left:352.40000000000003px;top:681.0px">15m 0.07</div><div class="title" style="left:503.5px;top:498.0px">Event Loop Delay (ms)</div><svg class="info" style="left:937px;top:504.0px" width="14" height="14" viewBox="0 0 14 14"><circle cx="7" cy="7" r="6.9" fill="#2b7fa3"/><rect x="5.9" y="2.2" width="2.2" height="1.9" fill="#fff"/><path d="M4.9 5.3H8.1V10.1H9V11.8H4.9V10.1H5.9V7H4.9Z" fill="#fff"/></svg><div class="dot" style="left:502.9px;top:683.9px;background:#e6397f"></div><div class="leg" style="left:516.0px;top:681.0px">Event Loop Delay 0.69 ms</div>
<div id="edge"></div><div style="position:absolute;left:976px;top:0;width:1px;height:15px;background:#4d5d72"></div><div style="position:absolute;left:976px;top:451px;width:1px;height:264px;background:#1e1a18"></div><div style="position:absolute;left:975px;top:3px;width:1px;height:54px;background:#f3f3f5"></div>
</body></html>
